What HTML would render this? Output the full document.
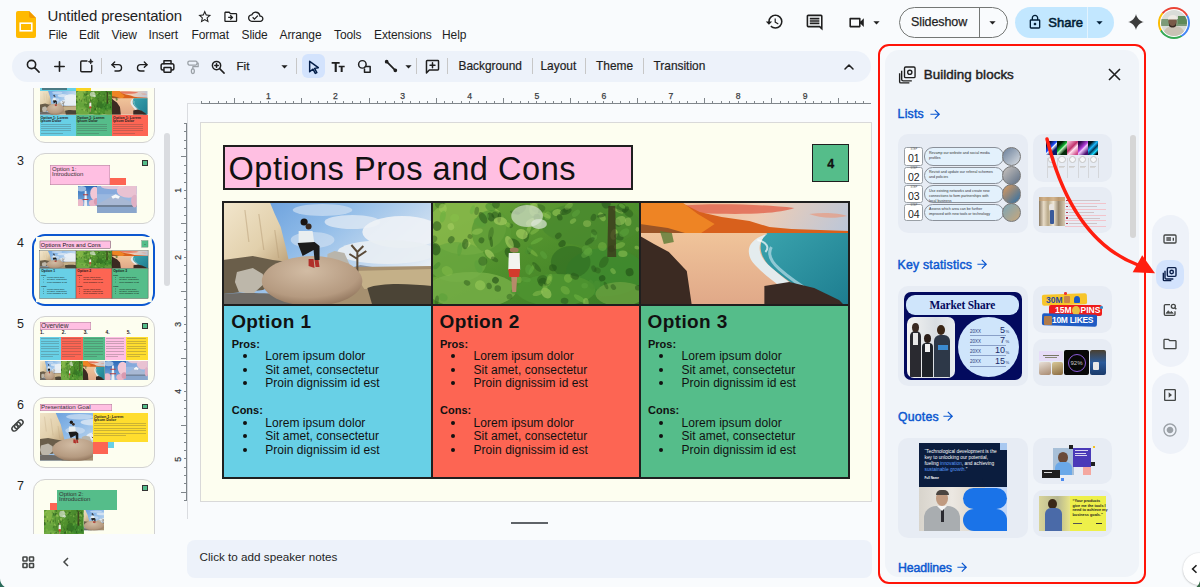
<!DOCTYPE html>
<html><head><meta charset="utf-8">
<style>
*{box-sizing:border-box;margin:0;padding:0}
html,body{width:1200px;height:587px;overflow:hidden;background:#f9fbfd;font-family:"Liberation Sans",sans-serif;color:#1f1f1f}
.a{position:absolute}
.t{position:absolute;white-space:nowrap;line-height:1}
svg.i{position:absolute;overflow:visible}
</style></head><body>
<svg width="0" height="0" style="position:absolute">
<defs>
 <linearGradient id="sky1" x1="0" y1="0" x2="1" y2="0.6"><stop offset="0" stop-color="#5c95d8"/><stop offset="0.45" stop-color="#8fbbe8"/><stop offset="1" stop-color="#e8eef4"/></linearGradient>
 <linearGradient id="gnd1" x1="0" y1="0" x2="0" y2="1"><stop offset="0" stop-color="#b7a27a"/><stop offset="1" stop-color="#5c5040"/></linearGradient>
 <radialGradient id="bld1" cx="0.45" cy="0.3" r="0.75"><stop offset="0" stop-color="#d2bca4"/><stop offset=".7" stop-color="#b59a80"/><stop offset="1" stop-color="#8a6e56"/></radialGradient>
 <linearGradient id="cliff1" x1="0" y1="0" x2="1" y2="1"><stop offset="0" stop-color="#f2e6cc"/><stop offset=".6" stop-color="#e2d0ac"/><stop offset="1" stop-color="#b89c74"/></linearGradient>
 <linearGradient id="jg" x1="0" y1="0" x2="1" y2="1"><stop offset="0" stop-color="#6da63a"/><stop offset=".5" stop-color="#4f8f2c"/><stop offset="1" stop-color="#3a7a25"/></linearGradient>
 <linearGradient id="bsky" x1="0" y1="0" x2="1" y2="0.3"><stop offset="0" stop-color="#f0b080"/><stop offset=".55" stop-color="#f0cdb4"/><stop offset="1" stop-color="#b9c6da"/></linearGradient>
 <linearGradient id="sea" x1="0" y1="0" x2="1" y2="1"><stop offset="0" stop-color="#3aa3ad"/><stop offset="1" stop-color="#1d7d90"/></linearGradient>
 <linearGradient id="sand" x1="0" y1="0" x2="0" y2="1"><stop offset="0" stop-color="#f0c49a"/><stop offset="1" stop-color="#e0a888"/></linearGradient>
 <symbol id="p1" viewBox="0 0 210 103" preserveAspectRatio="none">
  <rect width="210" height="103" fill="url(#sky1)"/>
  <ellipse cx="100" cy="8" rx="30" ry="6" fill="#cfe0f2" opacity=".7"/>
  <ellipse cx="130" cy="20" rx="28" ry="7" fill="#dfe9f4" opacity=".8"/>
  <ellipse cx="180" cy="30" rx="40" ry="16" fill="#eef2f6" opacity=".9"/>
  <ellipse cx="165" cy="50" rx="50" ry="12" fill="#e9eef3" opacity=".9"/>
  <ellipse cx="90" cy="38" rx="22" ry="8" fill="#d5e3f1" opacity=".6"/>
  <path d="M128 66L138 63L150 65L160 67L128 68z" fill="#8a96a8"/>
  <path d="M60 66L210 64V103H60z" fill="#a69070"/>
  <path d="M130 69L210 67V86L142 87z" fill="#c4b088"/>
  <path d="M145 86C160 80 190 82 210 84V103H150z" fill="#4b4436"/>
  <path d="M105 52L112 49L122 51L127 62L124 68L104 67z" fill="#b9b5ab"/>
  <path d="M135 70V50M135 50L129 43M135 50L141 44M135 55L144 49M135 57L127 52" stroke="#5a4a38" stroke-width="2" fill="none"/>
  <path d="M0 0H47L52 12L58 25L63 45L66 58L52 62L30 64L0 68z" fill="url(#cliff1)"/>
  <path d="M22 8L26 40M36 12L41 48M52 28L56 56" stroke="#b89e78" stroke-width="1.2" opacity=".5"/>
  <path d="M0 58L30 54L50 58L66 60L60 78L40 88L0 92z" fill="#6a5e4a"/>
  <path d="M14 70L30 66L40 72L41 82L30 92L16 90L12 80z" fill="#bdb7aa"/>
  <path d="M0 92C20 90 50 91 70 94L80 103H0z" fill="#6e6b66"/>
  <ellipse cx="89.5" cy="79" rx="50.5" ry="25" fill="url(#bld1)"/>
  <circle cx="81.5" cy="20" r="3.6" fill="#1a1512"/>
  <circle cx="86" cy="24.5" r="3" fill="#3a2a20"/>
  <path d="M76 29L90 29L92 43L76 43z" fill="#e8eef0"/>
  <path d="M75 41L92 40L97 44L97 58L92 58L91 48L80 54z" fill="#1c1c1c"/>
  <path d="M86 57L91 57L92 66L86 64zM92 58L96 58L97 65L93 65z" fill="#b0302a"/>
 </symbol>
 <symbol id="p2" viewBox="0 0 210 103" preserveAspectRatio="none">
  <rect width="210" height="103" fill="url(#jg)"/>
  <ellipse cx="35" cy="25" rx="40" ry="28" fill="#88b84a" opacity=".85"/>
  <ellipse cx="25" cy="60" rx="30" ry="20" fill="#6aa840" opacity=".8"/>
  <ellipse cx="60" cy="30" rx="20" ry="22" fill="#5a9a34" opacity=".8"/>
  <ellipse cx="160" cy="22" rx="50" ry="22" fill="#4a8a2e" opacity=".85"/>
  <ellipse cx="175" cy="70" rx="40" ry="24" fill="#3f8a2e" opacity=".9"/>
  <ellipse cx="140" cy="60" rx="20" ry="16" fill="#2e6a22" opacity=".6"/>
  <ellipse cx="40" cy="88" rx="45" ry="18" fill="#78b048" opacity=".8"/>
  <ellipse cx="125" cy="88" rx="40" ry="16" fill="#4e9430" opacity=".9"/>
  <ellipse cx="190" cy="92" rx="25" ry="12" fill="#6aa040" opacity=".8"/>
  <ellipse cx="68.0" cy="15.5" rx="5.3" ry="1.8" transform="rotate(96 68.0 15.5)" fill="#1e4a14" opacity="0.58"/>
  <ellipse cx="45.1" cy="8.9" rx="4.1" ry="2.3" transform="rotate(99 45.1 8.9)" fill="#24521a" opacity="0.38"/>
  <ellipse cx="46.9" cy="64.6" rx="6.7" ry="3.5" transform="rotate(71 46.9 64.6)" fill="#5aa03a" opacity="0.60"/>
  <ellipse cx="116.9" cy="13.7" rx="4.1" ry="3.4" transform="rotate(103 116.9 13.7)" fill="#88c04a" opacity="0.40"/>
  <ellipse cx="122.1" cy="65.8" rx="3.9" ry="3.4" transform="rotate(11 122.1 65.8)" fill="#1e4a14" opacity="0.47"/>
  <ellipse cx="111.7" cy="80.1" rx="4.3" ry="4.7" transform="rotate(65 111.7 80.1)" fill="#1e4a14" opacity="0.52"/>
  <ellipse cx="51.3" cy="59.2" rx="4.6" ry="4.6" transform="rotate(131 51.3 59.2)" fill="#1e4a14" opacity="0.38"/>
  <ellipse cx="87.8" cy="78.0" rx="2.8" ry="3.2" transform="rotate(7 87.8 78.0)" fill="#88c04a" opacity="0.49"/>
  <ellipse cx="183.9" cy="32.3" rx="5.5" ry="3.6" transform="rotate(104 183.9 32.3)" fill="#9ccc5a" opacity="0.59"/>
  <ellipse cx="99.6" cy="68.4" rx="2.3" ry="4.0" transform="rotate(116 99.6 68.4)" fill="#4a9030" opacity="0.60"/>
  <ellipse cx="59.8" cy="39.7" rx="5.3" ry="1.6" transform="rotate(83 59.8 39.7)" fill="#1e4a14" opacity="0.47"/>
  <ellipse cx="45.8" cy="29.6" rx="5.7" ry="2.9" transform="rotate(165 45.8 29.6)" fill="#9ccc5a" opacity="0.46"/>
  <ellipse cx="115.4" cy="91.0" rx="6.1" ry="4.5" transform="rotate(50 115.4 91.0)" fill="#b2d66a" opacity="0.52"/>
  <ellipse cx="79.9" cy="23.8" rx="2.4" ry="2.0" transform="rotate(119 79.9 23.8)" fill="#24521a" opacity="0.40"/>
  <ellipse cx="59.2" cy="15.0" rx="4.7" ry="3.6" transform="rotate(57 59.2 15.0)" fill="#24521a" opacity="0.59"/>
  <ellipse cx="137.5" cy="76.2" rx="4.3" ry="4.5" transform="rotate(171 137.5 76.2)" fill="#88c04a" opacity="0.45"/>
  <ellipse cx="83.8" cy="10.7" rx="5.2" ry="1.7" transform="rotate(12 83.8 10.7)" fill="#1e4a14" opacity="0.38"/>
  <ellipse cx="126.2" cy="10.5" rx="4.8" ry="3.4" transform="rotate(171 126.2 10.5)" fill="#9ccc5a" opacity="0.57"/>
  <ellipse cx="129.0" cy="15.3" rx="3.3" ry="2.7" transform="rotate(66 129.0 15.3)" fill="#2a5a1a" opacity="0.60"/>
  <ellipse cx="97.9" cy="49.8" rx="2.4" ry="1.9" transform="rotate(62 97.9 49.8)" fill="#24521a" opacity="0.39"/>
  <ellipse cx="4.9" cy="98.0" rx="4.6" ry="2.0" transform="rotate(98 4.9 98.0)" fill="#24521a" opacity="0.42"/>
  <ellipse cx="135.0" cy="9.4" rx="6.2" ry="3.3" transform="rotate(163 135.0 9.4)" fill="#1e4a14" opacity="0.48"/>
  <ellipse cx="163.6" cy="34.0" rx="3.1" ry="4.3" transform="rotate(177 163.6 34.0)" fill="#5aa03a" opacity="0.60"/>
  <ellipse cx="171.8" cy="76.2" rx="3.1" ry="3.3" transform="rotate(64 171.8 76.2)" fill="#1e4a14" opacity="0.55"/>
  <ellipse cx="99.2" cy="19.9" rx="5.0" ry="2.7" transform="rotate(146 99.2 19.9)" fill="#b2d66a" opacity="0.59"/>
  <ellipse cx="76.6" cy="22.7" rx="3.1" ry="2.2" transform="rotate(37 76.6 22.7)" fill="#88c04a" opacity="0.56"/>
  <ellipse cx="100.7" cy="67.3" rx="6.0" ry="1.8" transform="rotate(119 100.7 67.3)" fill="#6ab040" opacity="0.60"/>
  <ellipse cx="157.5" cy="49.2" rx="2.9" ry="4.3" transform="rotate(60 157.5 49.2)" fill="#6ab040" opacity="0.60"/>
  <ellipse cx="83.1" cy="41.3" rx="6.7" ry="4.0" transform="rotate(31 83.1 41.3)" fill="#1e4a14" opacity="0.50"/>
  <ellipse cx="97.7" cy="67.6" rx="5.1" ry="3.6" transform="rotate(85 97.7 67.6)" fill="#5aa03a" opacity="0.60"/>
  <ellipse cx="115.2" cy="13.5" rx="2.1" ry="4.9" transform="rotate(117 115.2 13.5)" fill="#9ccc5a" opacity="0.46"/>
  <ellipse cx="183.1" cy="85.1" rx="3.1" ry="2.4" transform="rotate(53 183.1 85.1)" fill="#24521a" opacity="0.43"/>
  <ellipse cx="114.3" cy="85.9" rx="2.3" ry="4.1" transform="rotate(162 114.3 85.9)" fill="#88c04a" opacity="0.46"/>
  <ellipse cx="192.7" cy="51.7" rx="4.7" ry="3.3" transform="rotate(3 192.7 51.7)" fill="#9ccc5a" opacity="0.50"/>
  <ellipse cx="163.0" cy="15.4" rx="2.7" ry="3.7" transform="rotate(22 163.0 15.4)" fill="#24521a" opacity="0.48"/>
  <ellipse cx="116.6" cy="80.8" rx="2.5" ry="3.5" transform="rotate(45 116.6 80.8)" fill="#1e4a14" opacity="0.48"/>
  <ellipse cx="118.0" cy="78.3" rx="6.6" ry="3.1" transform="rotate(110 118.0 78.3)" fill="#88c04a" opacity="0.40"/>
  <ellipse cx="58.2" cy="52.3" rx="6.0" ry="3.3" transform="rotate(45 58.2 52.3)" fill="#b2d66a" opacity="0.58"/>
  <ellipse cx="187.5" cy="20.9" rx="4.2" ry="3.0" transform="rotate(71 187.5 20.9)" fill="#24521a" opacity="0.41"/>
  <ellipse cx="15.4" cy="69.0" rx="5.9" ry="4.6" transform="rotate(28 15.4 69.0)" fill="#88c04a" opacity="0.44"/>
  <ellipse cx="53.2" cy="14.1" rx="4.3" ry="4.1" transform="rotate(17 53.2 14.1)" fill="#5aa03a" opacity="0.60"/>
  <ellipse cx="207.9" cy="85.7" rx="2.8" ry="3.0" transform="rotate(93 207.9 85.7)" fill="#1e4a14" opacity="0.44"/>
  <ellipse cx="19.4" cy="37.7" rx="3.7" ry="3.1" transform="rotate(127 19.4 37.7)" fill="#24521a" opacity="0.51"/>
  <ellipse cx="107.6" cy="6.6" rx="6.9" ry="4.3" transform="rotate(175 107.6 6.6)" fill="#2a5a1a" opacity="0.42"/>
  <ellipse cx="190.2" cy="18.7" rx="5.8" ry="4.4" transform="rotate(153 190.2 18.7)" fill="#b2d66a" opacity="0.45"/>
  <ellipse cx="112.7" cy="53.0" rx="4.5" ry="2.6" transform="rotate(50 112.7 53.0)" fill="#5aa03a" opacity="0.60"/>
  <ellipse cx="89.3" cy="7.5" rx="6.7" ry="3.7" transform="rotate(144 89.3 7.5)" fill="#1e4a14" opacity="0.37"/>
  <ellipse cx="181.2" cy="46.7" rx="3.7" ry="3.4" transform="rotate(167 181.2 46.7)" fill="#1e4a14" opacity="0.36"/>
  <ellipse cx="149.0" cy="96.6" rx="6.8" ry="2.4" transform="rotate(33 149.0 96.6)" fill="#6ab040" opacity="0.60"/>
  <ellipse cx="64.1" cy="78.2" rx="3.4" ry="3.3" transform="rotate(32 64.1 78.2)" fill="#1e4a14" opacity="0.60"/>
  <ellipse cx="7.8" cy="1.9" rx="4.5" ry="4.9" transform="rotate(93 7.8 1.9)" fill="#2a5a1a" opacity="0.38"/>
  <ellipse cx="172.0" cy="44.5" rx="4.5" ry="4.4" transform="rotate(71 172.0 44.5)" fill="#88c04a" opacity="0.40"/>
  <ellipse cx="48.2" cy="20.5" rx="6.4" ry="4.1" transform="rotate(25 48.2 20.5)" fill="#5aa03a" opacity="0.60"/>
  <ellipse cx="175.8" cy="1.5" rx="5.1" ry="4.6" transform="rotate(78 175.8 1.5)" fill="#24521a" opacity="0.56"/>
  <ellipse cx="182.8" cy="69.1" rx="3.4" ry="2.3" transform="rotate(53 182.8 69.1)" fill="#9ccc5a" opacity="0.42"/>
  <ellipse cx="0.8" cy="37.5" rx="3.6" ry="4.9" transform="rotate(58 0.8 37.5)" fill="#2a5a1a" opacity="0.40"/>
  <ellipse cx="38.4" cy="34.5" rx="2.4" ry="2.5" transform="rotate(118 38.4 34.5)" fill="#1e4a14" opacity="0.37"/>
  <ellipse cx="171.6" cy="14.8" rx="4.9" ry="2.9" transform="rotate(54 171.6 14.8)" fill="#9ccc5a" opacity="0.50"/>
  <ellipse cx="111.1" cy="77.3" rx="5.3" ry="4.0" transform="rotate(158 111.1 77.3)" fill="#2a5a1a" opacity="0.53"/>
  <ellipse cx="103.8" cy="29.3" rx="5.1" ry="2.0" transform="rotate(148 103.8 29.3)" fill="#88c04a" opacity="0.51"/>
  <ellipse cx="154.1" cy="83.7" rx="2.7" ry="3.3" transform="rotate(91 154.1 83.7)" fill="#5aa03a" opacity="0.60"/>
  <ellipse cx="173.5" cy="60.2" rx="6.5" ry="3.9" transform="rotate(125 173.5 60.2)" fill="#1e4a14" opacity="0.36"/>
  <ellipse cx="133.8" cy="98.8" rx="3.9" ry="3.1" transform="rotate(9 133.8 98.8)" fill="#24521a" opacity="0.52"/>
  <ellipse cx="102.8" cy="0.3" rx="6.0" ry="4.1" transform="rotate(91 102.8 0.3)" fill="#88c04a" opacity="0.48"/>
  <ellipse cx="156.6" cy="48.8" rx="6.0" ry="4.5" transform="rotate(42 156.6 48.8)" fill="#5aa03a" opacity="0.60"/>
  <ellipse cx="155.4" cy="100.5" rx="4.5" ry="2.8" transform="rotate(86 155.4 100.5)" fill="#9ccc5a" opacity="0.50"/>
  <ellipse cx="135.0" cy="8.0" rx="2.7" ry="2.4" transform="rotate(134 135.0 8.0)" fill="#24521a" opacity="0.38"/>
  <ellipse cx="101.3" cy="50.0" rx="6.9" ry="1.8" transform="rotate(39 101.3 50.0)" fill="#88c04a" opacity="0.48"/>
  <ellipse cx="97.6" cy="48.0" rx="2.6" ry="4.6" transform="rotate(36 97.6 48.0)" fill="#4a9030" opacity="0.60"/>
  <ellipse cx="3.7" cy="47.3" rx="6.1" ry="4.9" transform="rotate(81 3.7 47.3)" fill="#1e4a14" opacity="0.58"/>
  <ellipse cx="195.4" cy="7.7" rx="2.5" ry="4.1" transform="rotate(47 195.4 7.7)" fill="#24521a" opacity="0.56"/>
  <ellipse cx="106.8" cy="91.3" rx="5.5" ry="2.3" transform="rotate(162 106.8 91.3)" fill="#9ccc5a" opacity="0.39"/>
  <ellipse cx="199.5" cy="70.2" rx="4.0" ry="4.0" transform="rotate(75 199.5 70.2)" fill="#1e4a14" opacity="0.56"/>
  <ellipse cx="0.4" cy="77.3" rx="6.2" ry="1.9" transform="rotate(167 0.4 77.3)" fill="#88c04a" opacity="0.42"/>
  <ellipse cx="78.2" cy="40.5" rx="7.0" ry="3.6" transform="rotate(65 78.2 40.5)" fill="#b2d66a" opacity="0.56"/>
  <ellipse cx="58.9" cy="5.3" rx="5.3" ry="3.7" transform="rotate(27 58.9 5.3)" fill="#4a9030" opacity="0.60"/>
  <ellipse cx="107.3" cy="19.6" rx="3.9" ry="4.8" transform="rotate(159 107.3 19.6)" fill="#6ab040" opacity="0.60"/>
  <ellipse cx="84.0" cy="90.2" rx="4.8" ry="2.2" transform="rotate(15 84.0 90.2)" fill="#4a9030" opacity="0.60"/>
  <ellipse cx="94.7" cy="77.5" rx="5.2" ry="2.5" transform="rotate(9 94.7 77.5)" fill="#5aa03a" opacity="0.60"/>
  <ellipse cx="35.9" cy="42.7" rx="3.4" ry="2.4" transform="rotate(133 35.9 42.7)" fill="#b2d66a" opacity="0.51"/>
  <ellipse cx="63.2" cy="57.4" rx="4.0" ry="2.1" transform="rotate(29 63.2 57.4)" fill="#2a5a1a" opacity="0.49"/>
  <ellipse cx="95.1" cy="34.3" rx="5.8" ry="3.0" transform="rotate(99 95.1 34.3)" fill="#1e4a14" opacity="0.44"/>
  <ellipse cx="19.1" cy="24.6" rx="3.3" ry="3.5" transform="rotate(160 19.1 24.6)" fill="#b2d66a" opacity="0.45"/>
  <ellipse cx="156.6" cy="21.6" rx="3.4" ry="4.1" transform="rotate(90 156.6 21.6)" fill="#b2d66a" opacity="0.38"/>
  <ellipse cx="105.7" cy="64.9" rx="6.3" ry="2.3" transform="rotate(49 105.7 64.9)" fill="#2a5a1a" opacity="0.51"/>
  <ellipse cx="90.7" cy="32.1" rx="6.1" ry="4.9" transform="rotate(23 90.7 32.1)" fill="#b2d66a" opacity="0.59"/>
  <ellipse cx="102.9" cy="7.5" rx="6.7" ry="4.7" transform="rotate(95 102.9 7.5)" fill="#b2d66a" opacity="0.41"/>
  <ellipse cx="22.9" cy="15.9" rx="4.6" ry="3.9" transform="rotate(169 22.9 15.9)" fill="#88c04a" opacity="0.56"/>
  <ellipse cx="187.9" cy="8.8" rx="5.9" ry="1.5" transform="rotate(23 187.9 8.8)" fill="#9ccc5a" opacity="0.51"/>
  <ellipse cx="63.8" cy="13.2" rx="3.3" ry="3.7" transform="rotate(126 63.8 13.2)" fill="#1e4a14" opacity="0.43"/>
  <ellipse cx="198.1" cy="19.7" rx="3.3" ry="4.3" transform="rotate(0 198.1 19.7)" fill="#b2d66a" opacity="0.42"/>
  <ellipse cx="66.4" cy="86.5" rx="3.2" ry="3.3" transform="rotate(98 66.4 86.5)" fill="#2a5a1a" opacity="0.53"/>
  <ellipse cx="64.6" cy="2.2" rx="4.5" ry="3.9" transform="rotate(76 64.6 2.2)" fill="#24521a" opacity="0.46"/>
  <ellipse cx="77.7" cy="50.8" rx="5.5" ry="4.0" transform="rotate(65 77.7 50.8)" fill="#1e4a14" opacity="0.55"/>
  <ellipse cx="155.2" cy="52.0" rx="3.0" ry="4.9" transform="rotate(56 155.2 52.0)" fill="#5aa03a" opacity="0.60"/>
  <ellipse cx="97.7" cy="27.3" rx="6.4" ry="1.9" transform="rotate(112 97.7 27.3)" fill="#9ccc5a" opacity="0.47"/>
  <ellipse cx="191.2" cy="5.8" rx="5.0" ry="4.7" transform="rotate(10 191.2 5.8)" fill="#24521a" opacity="0.39"/>
  <ellipse cx="10.9" cy="6.2" rx="4.0" ry="4.6" transform="rotate(159 10.9 6.2)" fill="#9ccc5a" opacity="0.58"/>
  <ellipse cx="69.1" cy="19.1" rx="6.7" ry="4.1" transform="rotate(6 69.1 19.1)" fill="#b2d66a" opacity="0.56"/>
  <ellipse cx="206.8" cy="45.6" rx="2.5" ry="1.8" transform="rotate(15 206.8 45.6)" fill="#9ccc5a" opacity="0.49"/>
  <ellipse cx="159.3" cy="39.2" rx="5.8" ry="2.6" transform="rotate(145 159.3 39.2)" fill="#24521a" opacity="0.47"/>
  <ellipse cx="78.3" cy="94.7" rx="3.0" ry="2.8" transform="rotate(161 78.3 94.7)" fill="#2a5a1a" opacity="0.41"/>
  <ellipse cx="131.3" cy="41.7" rx="3.9" ry="3.1" transform="rotate(145 131.3 41.7)" fill="#1e4a14" opacity="0.54"/>
  <ellipse cx="188.7" cy="34.9" rx="3.4" ry="4.9" transform="rotate(111 188.7 34.9)" fill="#24521a" opacity="0.52"/>
  <ellipse cx="194.1" cy="30.6" rx="5.6" ry="3.6" transform="rotate(145 194.1 30.6)" fill="#5aa03a" opacity="0.60"/>
  <ellipse cx="5.1" cy="24.1" rx="4.4" ry="4.8" transform="rotate(172 5.1 24.1)" fill="#2a5a1a" opacity="0.58"/>
  <ellipse cx="171.1" cy="13.7" rx="4.5" ry="1.5" transform="rotate(168 171.1 13.7)" fill="#24521a" opacity="0.54"/>
  <ellipse cx="127.5" cy="33.8" rx="3.6" ry="2.8" transform="rotate(141 127.5 33.8)" fill="#1e4a14" opacity="0.45"/>
  <ellipse cx="33.6" cy="42.0" rx="5.2" ry="3.2" transform="rotate(98 33.6 42.0)" fill="#2a5a1a" opacity="0.57"/>
  <ellipse cx="207.4" cy="27.3" rx="2.4" ry="1.8" transform="rotate(90 207.4 27.3)" fill="#b2d66a" opacity="0.39"/>
  <ellipse cx="27.9" cy="47.5" rx="6.5" ry="2.3" transform="rotate(97 27.9 47.5)" fill="#5aa03a" opacity="0.60"/>
  <ellipse cx="163.7" cy="30.3" rx="3.4" ry="2.4" transform="rotate(46 163.7 30.3)" fill="#2a5a1a" opacity="0.41"/>
  <ellipse cx="51.5" cy="15.8" rx="6.4" ry="3.5" transform="rotate(59 51.5 15.8)" fill="#1e4a14" opacity="0.48"/>
  <ellipse cx="48.6" cy="83.3" rx="5.3" ry="5.0" transform="rotate(18 48.6 83.3)" fill="#9ccc5a" opacity="0.56"/>
  <ellipse cx="192.0" cy="4.2" rx="3.5" ry="1.9" transform="rotate(34 192.0 4.2)" fill="#6ab040" opacity="0.60"/>
  <ellipse cx="40.8" cy="7.7" rx="4.6" ry="2.1" transform="rotate(109 40.8 7.7)" fill="#6ab040" opacity="0.60"/>
  <ellipse cx="198.6" cy="10.9" rx="5.0" ry="3.7" transform="rotate(39 198.6 10.9)" fill="#1e4a14" opacity="0.36"/>
  <ellipse cx="210.0" cy="3.9" rx="5.7" ry="4.7" transform="rotate(147 210.0 3.9)" fill="#4a9030" opacity="0.60"/>
  <ellipse cx="142.4" cy="19.1" rx="3.6" ry="2.2" transform="rotate(143 142.4 19.1)" fill="#9ccc5a" opacity="0.45"/>
  <ellipse cx="167.1" cy="68.4" rx="2.8" ry="3.4" transform="rotate(118 167.1 68.4)" fill="#2a5a1a" opacity="0.45"/>
  <ellipse cx="59.5" cy="31.7" rx="6.8" ry="2.6" transform="rotate(102 59.5 31.7)" fill="#2a5a1a" opacity="0.35"/>
  <ellipse cx="161.0" cy="82.6" rx="5.2" ry="2.9" transform="rotate(73 161.0 82.6)" fill="#4a9030" opacity="0.60"/>
  <ellipse cx="189.3" cy="43.6" rx="6.1" ry="2.9" transform="rotate(159 189.3 43.6)" fill="#9ccc5a" opacity="0.38"/>
  <ellipse cx="10.9" cy="14.7" rx="6.0" ry="2.9" transform="rotate(103 10.9 14.7)" fill="#6ab040" opacity="0.60"/>
  <ellipse cx="105.9" cy="15.0" rx="3.4" ry="3.3" transform="rotate(167 105.9 15.0)" fill="#2a5a1a" opacity="0.54"/>
  <ellipse cx="166.4" cy="82.9" rx="3.5" ry="4.4" transform="rotate(8 166.4 82.9)" fill="#4a9030" opacity="0.60"/>
  <ellipse cx="11.2" cy="95.4" rx="3.9" ry="4.7" transform="rotate(112 11.2 95.4)" fill="#5aa03a" opacity="0.60"/>
  <ellipse cx="134.5" cy="88.2" rx="5.1" ry="3.7" transform="rotate(35 134.5 88.2)" fill="#88c04a" opacity="0.40"/>
  <ellipse cx="83.9" cy="53.3" rx="3.9" ry="1.9" transform="rotate(44 83.9 53.3)" fill="#9ccc5a" opacity="0.36"/>
  <ellipse cx="118.1" cy="78.0" rx="2.2" ry="4.4" transform="rotate(21 118.1 78.0)" fill="#88c04a" opacity="0.56"/>
  <ellipse cx="163.4" cy="66.8" rx="3.5" ry="2.4" transform="rotate(70 163.4 66.8)" fill="#24521a" opacity="0.46"/>
  <ellipse cx="4.9" cy="63.7" rx="4.4" ry="2.3" transform="rotate(137 4.9 63.7)" fill="#4a9030" opacity="0.60"/>
  <ellipse cx="175.7" cy="83.5" rx="4.0" ry="1.7" transform="rotate(65 175.7 83.5)" fill="#2a5a1a" opacity="0.48"/>
  <ellipse cx="138.0" cy="4.2" rx="2.7" ry="4.7" transform="rotate(56 138.0 4.2)" fill="#9ccc5a" opacity="0.36"/>
  <ellipse cx="105.8" cy="38.9" rx="6.8" ry="2.0" transform="rotate(154 105.8 38.9)" fill="#6ab040" opacity="0.60"/>
  <ellipse cx="145.4" cy="11.3" rx="2.7" ry="4.6" transform="rotate(52 145.4 11.3)" fill="#5aa03a" opacity="0.60"/>
  <ellipse cx="144.1" cy="74.3" rx="3.1" ry="4.4" transform="rotate(110 144.1 74.3)" fill="#2a5a1a" opacity="0.57"/>
  <ellipse cx="57.7" cy="84.0" rx="2.7" ry="3.3" transform="rotate(166 57.7 84.0)" fill="#2a5a1a" opacity="0.50"/>
  <ellipse cx="49.9" cy="38.3" rx="3.0" ry="2.9" transform="rotate(115 49.9 38.3)" fill="#2a5a1a" opacity="0.57"/>
  <ellipse cx="35.4" cy="80.8" rx="2.6" ry="3.4" transform="rotate(115 35.4 80.8)" fill="#2a5a1a" opacity="0.49"/>
  <ellipse cx="96" cy="14" rx="16" ry="11" fill="#cfdcc6" opacity=".75"/>
  <ellipse cx="108" cy="22" rx="8" ry="5" fill="#e0e8dc" opacity=".7"/>
  <path d="M178 4L185 4L186 55L177 55z" fill="#3a2e1a" opacity=".7"/>
  <ellipse cx="83" cy="48" rx="4.5" ry="2.5" fill="#9c7a58"/>
  <path d="M77.5 51H88.5L89 68H77z" fill="#f3f3f0"/>
  <path d="M77 67H89L88 75H78z" fill="#d33a2c"/>
  <path d="M80 75H86L85 90H81z" fill="#b78a6a"/>
 </symbol>
 <symbol id="p3" viewBox="0 0 210 103" preserveAspectRatio="none">
  <rect width="210" height="103" fill="url(#bsky)"/>
  <path d="M36 4C70 1 120 2 155 6C140 12 100 13 60 11z" fill="#e26a54" opacity=".85"/>
  <path d="M170 12C185 10 200 11 208 14C195 17 180 16 170 12z" fill="#e89a80" opacity=".7"/>
  <path d="M0 0H40L60 10L82 15L110 19L130 25L152 27L210 29V33H130L60 38L30 42L0 45z" fill="#d8601c"/>
  <path d="M0 0H42L58 12L75 22L60 32L20 36L0 38z" fill="#ee8424"/>
  <path d="M0 22L28 26L52 33L30 40L0 42z" fill="#9a5426"/>
  <path d="M0 31L210 31V103H0z" fill="url(#sand)"/>
  <path d="M128 31H210V103H185C168 92 150 80 132 66C120 55 117 40 128 31z" fill="url(#sea)"/>
  <path d="M128 32C117 40 118 52 128 62C142 75 160 88 176 98L160 98C143 86 124 73 113 60C105 48 110 37 128 32z" fill="#e4eef2" opacity=".95"/><path d="M132 45C128 52 132 60 140 67C150 76 165 86 178 94" stroke="#a8d4e0" stroke-width="3" fill="none" opacity=".8"/>
  <path d="M118 38C128 40 130 46 126 50" stroke="#fff" stroke-width="2" fill="none" opacity=".7"/>
  <path d="M0 34L14 42L29 50L47 69L52 103H0z" fill="#3b2a22"/>
  <path d="M20 29L32 31L34 40L24 42z" fill="#5a7a34" opacity=".8"/>
  <path d="M125 84L150 80L175 86L200 98L205 103H125z" fill="#3a2a24"/>
 </symbol>
 <linearGradient id="bl1" x1="0" y1="0" x2="0" y2="1"><stop offset="0" stop-color="#2a6ab8"/><stop offset="1" stop-color="#8ab4e0"/></linearGradient>
 <symbol id="p4" viewBox="0 0 60 60" preserveAspectRatio="none">
  <rect width="60" height="60" fill="url(#bl1)"/>
  <ellipse cx="10" cy="8" rx="14" ry="8" fill="#c8dcf0" opacity=".7"/>
  <path d="M20 14L25 14L27 60L18 60z" fill="#eef0f2"/>
  <path d="M15 24H30V27H15zM14 38H31V41H14z" fill="#b33a3a"/>
  <ellipse cx="50" cy="22" rx="14" ry="20" fill="#f2c8d6"/>
  <ellipse cx="44" cy="50" rx="12" ry="10" fill="#e8b4c6"/>
  <ellipse cx="6" cy="50" rx="10" ry="12" fill="#eab8c8"/>
  <ellipse cx="55" cy="45" rx="8" ry="10" fill="#d89ab0"/>
 </symbol>
 <symbol id="p5" viewBox="0 0 100 60" preserveAspectRatio="none">
  <rect width="100" height="60" fill="#9ab8e0"/>
  <rect y="0" width="100" height="18" fill="#86aadc"/>
  <path d="M0 40L22 30L38 22L47 19L56 22L74 31L100 40V60H0z" fill="#a8b8d4"/>
  <path d="M36 23L47 18L58 23L54 28L46 26L40 28z" fill="#f6f8fa"/>
  <rect y="42" width="100" height="4" fill="#6a7a90"/>
  <rect y="46" width="100" height="14" fill="#8aa6cc"/>
  <ellipse cx="80" cy="10" rx="30" ry="16" fill="#e9c2d2"/>
  <ellipse cx="95" cy="33" rx="9" ry="14" fill="#dfb0c4"/>
  <ellipse cx="40" cy="1" rx="30" ry="6" fill="#eecad6" opacity=".85"/>
 </symbol>
</defs>
</svg>

<!-- ===== HEADER ===== -->
<svg class="i" style="left:16px;top:11px" width="20" height="27" viewBox="0 0 20 27">
 <path d="M2 0H13L20 7V25a2 2 0 0 1-2 2H2a2 2 0 0 1-2-2V2a2 2 0 0 1 2-2z" fill="#ffba00"/>
 <path d="M13 0L20 7H15a2 2 0 0 1-2-2z" fill="#f29900"/>
 <rect x="4.2" y="12.2" width="11.6" height="7.6" fill="none" stroke="#fff" stroke-width="1.6"/>
</svg>
<div class="t" style="left:47.5px;top:8px;font-size:15px;letter-spacing:-0.15px;color:#1f1f1f">Untitled presentation</div>
<svg class="i" style="left:197.4px;top:9.2px" width="15.5" height="15.5" viewBox="0 0 24 24" fill="#1f1f1f"><path d="M22 9.24l-7.19-.62L12 2 9.19 8.63 2 9.24l5.46 4.73L5.82 21 12 17.27 18.18 21l-1.63-7.03L22 9.24zM12 15.4l-3.76 2.27 1-4.28-3.32-2.88 4.38-.38L12 6.1l1.71 4.04 4.38.38-3.32 2.88 1 4.28L12 15.4z"/></svg>
<svg class="i" style="left:223px;top:9.3px" width="15.5" height="15.5" viewBox="0 0 24 24" fill="#1f1f1f"><path d="M20 6h-8l-2-2H4c-1.1 0-1.99.9-1.99 2L2 18c0 1.1.9 2 2 2h16c1.1 0 2-.9 2-2V8c0-1.1-.9-2-2-2zm0 12H4V6h5.17l2 2H20v10zm-7.84-6H8v2h4.16l-1.59 1.59L11.99 17 16 13.01 11.99 9l-1.41 1.41L12.16 12z"/></svg>
<svg class="i" style="left:248.4px;top:8.6px" width="15.5" height="15.5" viewBox="0 0 24 24" fill="#1f1f1f"><path d="M19.35 10.04A7.49 7.49 0 0 0 12 4C9.11 4 6.6 5.64 5.35 8.04A5.994 5.994 0 0 0 0 14c0 3.31 2.69 6 6 6h13c2.76 0 5-2.24 5-5 0-2.64-2.05-4.78-4.65-4.96zM19 18H6c-2.21 0-4-1.790-4-4 0-2.05 1.53-3.76 3.56-3.97l1.07-.11.5-.95A5.469 5.469 0 0 1 12 6c2.62 0 4.88 1.86 5.39 4.43l.3 1.5 1.53.11A2.98 2.98 0 0 1 22 15c0 1.65-1.35 3-3 3zm-9-3.82l-2.09-2.09L6.5 13.5 10 17l6.01-6.01-1.41-1.41z"/></svg>

<div style="font-size:12px;letter-spacing:-0.1px">
<div class="t" style="left:48.5px;top:29px">File</div>
<div class="t" style="left:79px;top:29px">Edit</div>
<div class="t" style="left:111.5px;top:29px">View</div>
<div class="t" style="left:148.5px;top:29px">Insert</div>
<div class="t" style="left:191.5px;top:29px">Format</div>
<div class="t" style="left:241.5px;top:29px">Slide</div>
<div class="t" style="left:279.5px;top:29px">Arrange</div>
<div class="t" style="left:334px;top:29px">Tools</div>
<div class="t" style="left:374px;top:29px">Extensions</div>
<div class="t" style="left:442px;top:29px">Help</div>
</div>

<svg class="i" style="left:765px;top:12px" width="19.2" height="19.2" viewBox="0 0 24 24" fill="#1f1f1f"><path d="M13 3a9 9 0 0 0-9 9H1l3.89 3.89.07.14L9 12H6c0-3.87 3.13-7 7-7s7 3.13 7 7-3.13 7-7 7c-1.93 0-3.68-.79-4.94-2.06l-1.42 1.42A8.954 8.954 0 0 0 13 21a9 9 0 0 0 0-18zm-1 5v5l4.28 2.54.72-1.21-3.5-2.08V8H12z"/></svg>
<svg class="i" style="left:804.5px;top:12.5px" width="19.2" height="19.2" viewBox="0 0 24 24" fill="#1f1f1f"><path d="M21.99 4c0-1.1-.89-2-1.99-2H4c-1.1 0-2 .9-2 2v12c0 1.1.9 2 2 2h14l4 4-.01-18zM20 4v13.17L18.83 16H4V4h16zM6 12h12v2H6zm0-3h12v2H6zm0-3h12v2H6z"/></svg>
<svg class="i" style="left:847px;top:12.5px" width="19.2" height="19.2" viewBox="0 0 24 24" fill="#1f1f1f"><path d="M15 8v8H5V8h10m1-2H4c-.55 0-1 .45-1 1v10c0 .55.45 1 1 1h12c.55 0 1-.45 1-1v-3.5l4 4v-11l-4 4V7c0-.55-.45-1-1-1z"/></svg>
<svg class="i" style="left:868.8px;top:14.5px" width="15" height="15" viewBox="0 0 24 24" fill="#1f1f1f"><path d="M7 10l5 5 5-5z"/></svg>

<div class="a" style="left:898.5px;top:6.5px;width:109.5px;height:31px;border:1px solid #747775;border-radius:16px"></div>
<div class="a" style="left:979px;top:7px;width:1px;height:30px;background:#747775"></div>
<div class="t" style="left:911px;top:16px;font-size:12.5px;letter-spacing:-0.1px;-webkit-text-stroke:0.25px #1f1f1f;color:#1f1f1f">Slideshow</div>
<svg class="i" style="left:985.2px;top:14.5px" width="15" height="15" viewBox="0 0 24 24" fill="#1f1f1f"><path d="M7 10l5 5 5-5z"/></svg>

<div class="a" style="left:1014.5px;top:6.5px;width:99px;height:31.5px;border-radius:16px;background:#c2e7ff"></div>
<div class="a" style="left:1086.5px;top:6.5px;width:1px;height:31.5px;background:#f9fbfd;opacity:.6"></div>
<svg class="i" style="left:1026.5px;top:13.5px" width="16" height="16" viewBox="0 0 24 24" fill="#001d35"><path d="M18 8h-1V6c0-2.76-2.24-5-5-5S7 3.24 7 6v2H6c-1.1 0-2 .9-2 2v10c0 1.1.9 2 2 2h12c1.1 0 2-.9 2-2V10c0-1.1-.9-2-2-2zM9 6c0-1.66 1.34-3 3-3s3 1.34 3 3v2H9V6zm9 14H6V10h12v10zm-6-3c1.1 0 2-.9 2-2s-.9-2-2-2-2 .9-2 2 .9 2 2 2z"/></svg>
<div class="t" style="left:1048.3px;top:16.3px;font-size:13px;font-weight:400;letter-spacing:0px;-webkit-text-stroke:0.55px #001d35;color:#001d35">Share</div>
<svg class="i" style="left:1091.8px;top:14.5px" width="15" height="15" viewBox="0 0 24 24" fill="#001d35"><path d="M7 10l5 5 5-5z"/></svg>

<svg class="i" style="left:1127.5px;top:14.2px" width="16" height="16" viewBox="0 0 24 24" fill="#3c3c3c"><path d="M12 0C13 6 18 11 24 12 18 13 13 18 12 24 11 18 6 13 0 12 6 11 11 6 12 0z"/></svg>

<div class="a" style="left:1158px;top:6.5px;width:32px;height:32px;border-radius:50%;background:conic-gradient(from -50deg,#ea4335 0deg 110deg,#4285f4 110deg 200deg,#34a853 200deg 290deg,#fbbc04 290deg 360deg)"></div>
<div class="a" style="left:1160px;top:8.5px;width:28px;height:28px;border-radius:50%;background:#fff"></div>
<svg class="i" style="left:1161px;top:9.5px" width="26" height="26" viewBox="0 0 26 26">
 <clipPath id="avc"><circle cx="13" cy="13" r="13"/></clipPath>
 <g clip-path="url(#avc)">
  <rect width="26" height="26" fill="#d9dcd8"/>
  <rect x="0" y="9" width="26" height="7" fill="#7d9a78"/>
  <rect x="17" y="6" width="9" height="8" fill="#5f8a5a"/>
  <path d="M2 26c0-6 4-10 11-10s11 4 11 10z" fill="#c9c2b4"/>
  <ellipse cx="11.5" cy="11.5" rx="4.2" ry="5" fill="#7a5a48"/>
  <path d="M8 13c1 4 6 4 7 0v3c-2 2-5 2-7 0z" fill="#3a2a22"/>
  <path d="M7 8c1-4 9-4 9 0v1.5H7z" fill="#eeeae4"/>
 </g>
</svg>

<!-- ===== TOOLBAR ===== -->
<div class="a" style="left:12px;top:50.5px;width:859px;height:31px;border-radius:16px;background:#edf2fa"></div>
<div id="tb">
<svg class="i" style="left:25.15px;top:58.45px" width="16.5" height="16.5" viewBox="0 0 24 24" fill="none" stroke="#1f1f1f" stroke-width="2.3" stroke-linecap="round" stroke-linejoin="round"><circle cx="9.5" cy="9.5" r="6"/><path d="M14 14l6.5 6.5"/></svg>
<svg class="i" style="left:52.10px;top:58.90px" width="15" height="15" viewBox="0 0 24 24" fill="none" stroke="#1f1f1f" stroke-width="2.6" stroke-linecap="round" stroke-linejoin="round"><path d="M12 4.5v15M4.5 12h15"/></svg>
<svg class="i" style="left:77.85px;top:58.45px" width="16.5" height="16.5" viewBox="0 0 24 24" fill="none" stroke="#1f1f1f" stroke-width="2.1" stroke-linecap="round" stroke-linejoin="round"><path d="M13 4.5H5.5a1.5 1.5 0 0 0-1.5 1.5v12.5a1.5 1.5 0 0 0 1.5 1.5h13a1.5 1.5 0 0 0 1.5-1.5V11"/><path d="M18.5 1.8l1 2.5 2.5 1-2.5 1-1 2.5-1-2.5-2.5-1 2.5-1z" fill="#1f1f1f" stroke-width="1"/></svg>
<div class="a" style="left:100.90px;top:58px;width:1px;height:16px;background:#c7c7c7"></div>
<svg class="i" style="left:109.00px;top:59.20px" width="16" height="16" viewBox="0 0 24 24" fill="none" stroke="#1f1f1f" stroke-width="2.1" stroke-linecap="round" stroke-linejoin="round"><path d="M8.5 12.5L4.5 8.5l4-4"/><path d="M4.5 8.5h9.5a4.8 4.8 0 0 1 0 9.6H9"/></svg>
<svg class="i" style="left:133.80px;top:59.20px" width="16" height="16" viewBox="0 0 24 24" fill="none" stroke="#1f1f1f" stroke-width="2.1" stroke-linecap="round" stroke-linejoin="round"><path d="M15.5 12.5l4-4-4-4"/><path d="M19.5 8.5H10a4.8 4.8 0 0 0 0 9.6h5"/></svg>
<svg class="i" style="left:159.10px;top:58.30px" width="17" height="17" viewBox="0 0 24 24" fill="none" stroke="#1f1f1f" stroke-width="2.1" stroke-linecap="round" stroke-linejoin="round"><path d="M7 8V4h10v4"/><rect x="3" y="8" width="18" height="9" rx="2.5"/><rect x="7" y="13.5" width="10" height="6.5" rx="0.5" fill="#edf2fa"/></svg>
<svg class="i" style="left:184.00px;top:58.50px" width="17" height="17" viewBox="0 0 24 24" fill="none" stroke="#9aa0a6" stroke-width="1.8" stroke-linecap="round" stroke-linejoin="round"><rect x="5.5" y="3" width="13" height="5.5" rx="2"/><path d="M18.5 5.8h1.5v5H12.5v3"/><rect x="10.5" y="14" width="4" height="6.5" rx="2"/></svg>
<svg class="i" style="left:210.25px;top:58.55px" width="16.5" height="16.5" viewBox="0 0 24 24" fill="none" stroke="#1f1f1f" stroke-width="2.2" stroke-linecap="round" stroke-linejoin="round"><circle cx="9.5" cy="9.5" r="6"/><path d="M14 14l6.5 6.5M9.5 7v5M7 9.5h5"/></svg>
<div class="t" style="left:236.5px;top:59.5px;font-size:11.6px;-webkit-text-stroke:0.25px #1f1f1f;color:#1f1f1f">Fit</div>
<svg class="i" style="left:276.70px;top:59.00px" width="15" height="15" viewBox="0 0 24 24" fill="#1f1f1f"><path d="M7 10l5 5 5-5z"/></svg>
<div class="a" style="left:295.80px;top:58px;width:1px;height:16px;background:#c7c7c7"></div>
<div class="a" style="left:302px;top:54px;width:23.3px;height:23.8px;border-radius:6px;background:#d3e3fd"></div>
<svg class="i" style="left:305.60px;top:59.20px" width="16" height="16" viewBox="0 0 24 24" fill="none" stroke="#041e49" stroke-width="2.2" stroke-linejoin="round"><path d="M5.5 3.5l13 9.5-5.6 1.1 3.4 6.3-2.4 1.3-3.4-6.4-5 3.8z"/></svg>
<svg class="i" style="left:330.00px;top:58.50px" width="16" height="16" viewBox="0 0 24 24" fill="#1f1f1f"><path d="M2.5 4.5h12v2.8H10.2V19.5H7V7.3H2.5zM13 10h9v2.5h-3v7h-3v-7h-3z"/></svg>
<svg class="i" style="left:356.30px;top:58.30px" width="17" height="17" viewBox="0 0 24 24" fill="none" stroke="#1f1f1f" stroke-width="2.1" stroke-linecap="round" stroke-linejoin="round"><circle cx="9" cy="9" r="5.3"/><path d="M13 12h7v8h-8v-4.5"/></svg>
<svg class="i" style="left:383.00px;top:57.80px" width="16" height="16" viewBox="0 0 24 24" fill="none" stroke="#1f1f1f" stroke-width="2.6" stroke-linecap="round" stroke-linejoin="round"><path d="M5.5 5.5l13 13"/><circle cx="5.5" cy="5.5" r="1.5" fill="#1f1f1f"/><circle cx="18.5" cy="18.5" r="1.5" fill="#1f1f1f"/></svg>
<svg class="i" style="left:400.60px;top:59.00px" width="15" height="15" viewBox="0 0 24 24" fill="#1f1f1f"><path d="M7 10l5 5 5-5z"/></svg>
<div class="a" style="left:415.80px;top:58px;width:1px;height:16px;background:#c7c7c7"></div>
<svg class="i" style="left:423.70px;top:58.00px" width="17" height="17" viewBox="0 0 24 24" fill="none" stroke="#1f1f1f" stroke-width="2.1" stroke-linecap="round" stroke-linejoin="round"><path d="M3.5 4.5a1 1 0 0 1 1-1h15a1 1 0 0 1 1 1v11.5a1 1 0 0 1-1 1H7.5l-4 4z"/><path d="M12 6.8v7M8.5 10.3h7"/></svg>
<div class="a" style="left:446.90px;top:58px;width:1px;height:16px;background:#c7c7c7"></div>
<div style="font-size:11.9px;color:#1f1f1f;-webkit-text-stroke:0.2px #1f1f1f">
<div class="t" style="left:458.5px;top:61px">Background</div>
<div class="t" style="left:540.5px;top:61px">Layout</div>
<div class="t" style="left:596px;top:61px">Theme</div>
<div class="t" style="left:653.5px;top:61px">Transition</div>
</div>
<div class="a" style="left:532.00px;top:58px;width:1px;height:16px;background:#c7c7c7"></div>
<div class="a" style="left:584.50px;top:58px;width:1px;height:16px;background:#c7c7c7"></div>
<div class="a" style="left:642.50px;top:58px;width:1px;height:16px;background:#c7c7c7"></div>
<svg class="i" style="left:840.80px;top:58.50px" width="16" height="16" viewBox="0 0 24 24" fill="none" stroke="#1f1f1f" stroke-width="2.3" stroke-linecap="round" stroke-linejoin="round"><path d="M6 15l6-6 6 6"/></svg>
</div>


<!-- ===== FILMSTRIP ===== -->
<div class="a" style="left:0;top:88px;width:186px;height:446px;overflow:hidden">
<div class="a" style="left:33.2px;top:-16px;width:121.5px;height:70.7px;border:1.3px solid #d2d2d2;border-radius:12px;background:#fdfef0"></div>
<div class="a" style="left:39.6px;top:-2.00px;width:36.30px;height:5.20px;background:#68d0e6;"></div>
<div class="a" style="left:76px;top:-2.00px;width:14.70px;height:5.20px;background:#f9d423;"></div>
<div class="a" style="left:41.5px;top:0.00px;width:25.50px;height:2.20px;background:#333;opacity:.55"></div>
<svg class="a" style="left:39.6px;top:3.20px" width="36.30" height="23.80"><use href="#p1"/></svg>
<svg class="a" style="left:75.9px;top:3.20px" width="36.30" height="23.80"><use href="#p2"/></svg>
<svg class="a" style="left:112.2px;top:3.20px" width="35.70" height="23.80"><use href="#p3"/></svg>
<div class="a" style="left:39.6px;top:27.00px;width:36.30px;height:21.30px;background:#68d0e6;"></div>
<div class="a" style="left:75.9px;top:27.00px;width:36.30px;height:21.30px;background:#55bd8a;"></div>
<div class="a" style="left:112.2px;top:27.00px;width:35.70px;height:21.30px;background:#fd6553;"></div>
<div class="t" style="left:40.5px;top:28.50px;font-size:3.6px;color:#222;line-height:1.05;font-weight:700">Option 1: Lorem<br>Ipsum Dolor</div>
<div class="a" style="left:40.5px;top:35.50px;width:30.00px;height:0.80px;background:#444;opacity:.28"></div>
<div class="a" style="left:40.5px;top:37.80px;width:30.00px;height:0.80px;background:#444;opacity:.28"></div>
<div class="a" style="left:40.5px;top:40.10px;width:30.00px;height:0.80px;background:#444;opacity:.28"></div>
<div class="a" style="left:40.5px;top:42.40px;width:30.00px;height:0.80px;background:#444;opacity:.28"></div>
<div class="a" style="left:40.5px;top:44.70px;width:22.00px;height:0.80px;background:#444;opacity:.28"></div>
<div class="t" style="left:76.8px;top:28.50px;font-size:3.6px;color:#222;line-height:1.05;font-weight:700">Option 1: Lorem<br>Ipsum Dolor</div>
<div class="a" style="left:76.8px;top:35.50px;width:30.00px;height:0.80px;background:#444;opacity:.28"></div>
<div class="a" style="left:76.8px;top:37.80px;width:30.00px;height:0.80px;background:#444;opacity:.28"></div>
<div class="a" style="left:76.8px;top:40.10px;width:30.00px;height:0.80px;background:#444;opacity:.28"></div>
<div class="a" style="left:76.8px;top:42.40px;width:30.00px;height:0.80px;background:#444;opacity:.28"></div>
<div class="a" style="left:76.8px;top:44.70px;width:22.00px;height:0.80px;background:#444;opacity:.28"></div>
<div class="t" style="left:113.1px;top:28.50px;font-size:3.6px;color:#222;line-height:1.05;font-weight:700">Option 1: Lorem<br>Ipsum Dolor</div>
<div class="a" style="left:113.1px;top:35.50px;width:30.00px;height:0.80px;background:#444;opacity:.28"></div>
<div class="a" style="left:113.1px;top:37.80px;width:30.00px;height:0.80px;background:#444;opacity:.28"></div>
<div class="a" style="left:113.1px;top:40.10px;width:30.00px;height:0.80px;background:#444;opacity:.28"></div>
<div class="a" style="left:113.1px;top:42.40px;width:30.00px;height:0.80px;background:#444;opacity:.28"></div>
<div class="a" style="left:113.1px;top:44.70px;width:22.00px;height:0.80px;background:#444;opacity:.28"></div>
<div class="a" style="left:33.2px;top:65px;width:121.5px;height:70.7px;border:1.3px solid #d2d2d2;border-radius:12px;background:#fdfef0"></div>
<div class="a" style="left:50.4px;top:76.50px;width:60.00px;height:20.50px;background:#ffbfe2;box-shadow:inset 0 0 0 0.4px rgba(0,0,0,.35)"></div>
<div class="t" style="left:52px;top:78.50px;font-size:6px;color:#222;line-height:0.95;color:#333">Option 1:<br>Introduction</div>
<div class="a" style="left:110.4px;top:90.00px;width:15.60px;height:7.20px;background:#fd6553;"></div>
<svg class="a" style="left:77.7px;top:97.50px" width="20.30" height="20.50"><use href="#p4"/></svg>
<svg class="a" style="left:97.3px;top:97.50px" width="39.70" height="27.30"><use href="#p5"/></svg>
<div class="a" style="left:141.8px;top:71.90px;width:6.20px;height:6.10px;background:#55bd8a;border:0.5px solid #333"></div>
<div class="a" style="left:32.3px;top:145.7px;width:123.1px;height:72.8px;border:2.8px solid #0b57d0;border-radius:13px;background:#fdfef0"></div>
<div class="a" style="left:35.7px;top:149.4px;width:670px;height:378px;transform-origin:0 0;transform:scale(0.173);overflow:hidden"><div class="a" style="left:0;top:0;width:670px;height:378px;background:#fdfef0"></div>
<div class="a" style="left:22px;top:22px;width:410px;height:45px;background:#ffbfe2;border:2px solid #1f1f1f"></div>
<div class="t" style="left:27.5px;top:29.80000000000001px;font-size:32.5px;letter-spacing:0.55px;color:#111">Options Pros and Cons</div>
<div class="a" style="left:611.4px;top:20.8px;width:36.8px;height:38px;background:#55bd8a;border:1.7px solid #1f1f1f"></div>
<div class="t" style="left:611.4px;width:36.8px;text-align:center;top:34.8px;font-size:12.5px;font-weight:700;-webkit-text-stroke:0.3px #111;color:#111">4</div>
<svg class="a" style="left:22px;top:79px" width="209" height="103"><use href="#p1"/></svg>
<svg class="a" style="left:231px;top:79px" width="208" height="103"><use href="#p2"/></svg>
<svg class="a" style="left:439px;top:79px" width="209" height="103"><use href="#p3"/></svg>
<div class="a" style="left:22px;top:181.5px;width:209px;height:173.5px;background:#68d0e6"></div>
<div class="a" style="left:231px;top:181.5px;width:208px;height:173.5px;background:#fd6553"></div>
<div class="a" style="left:439px;top:181.5px;width:209px;height:173.5px;background:#55bd8a"></div>
<div class="a" style="left:21px;top:78px;width:628px;height:278px;border:2px solid #1f1f1f"></div>
<div class="a" style="left:21px;top:180.5px;width:628px;height:2px;background:#1f1f1f"></div>
<div class="a" style="left:230px;top:78px;width:2px;height:278px;background:#1f1f1f"></div>
<div class="a" style="left:438.29999999999995px;top:78px;width:2px;height:278px;background:#1f1f1f"></div>
<div class="t" style="left:30.19999999999999px;top:189px;font-size:19px;font-weight:700;letter-spacing:0.4px;color:#111">Option 1</div>
<div class="t" style="left:30.69999999999999px;top:215.5px;font-size:11px;font-weight:700;color:#111">Pros:</div>
<div class="t" style="left:30.69999999999999px;top:282px;font-size:11px;font-weight:700;color:#111">Cons:</div>
<div class="a" style="left:41.69999999999999px;top:231.4px;width:4px;height:4px;border-radius:2px;background:#111"></div>
<div class="t" style="left:64.19999999999999px;top:227.4px;font-size:12px;letter-spacing:0.05px;color:#111">Lorem ipsum dolor</div>
<div class="a" style="left:41.69999999999999px;top:244.7px;width:4px;height:4px;border-radius:2px;background:#111"></div>
<div class="t" style="left:64.19999999999999px;top:240.7px;font-size:12px;letter-spacing:0.05px;color:#111">Sit amet, consectetur</div>
<div class="a" style="left:41.69999999999999px;top:258.0px;width:4px;height:4px;border-radius:2px;background:#111"></div>
<div class="t" style="left:64.19999999999999px;top:254.0px;font-size:12px;letter-spacing:0.05px;color:#111">Proin dignissim id est</div>
<div class="a" style="left:41.69999999999999px;top:297.9px;width:4px;height:4px;border-radius:2px;background:#111"></div>
<div class="t" style="left:64.19999999999999px;top:293.9px;font-size:12px;letter-spacing:0.05px;color:#111">Lorem ipsum dolor</div>
<div class="a" style="left:41.69999999999999px;top:311.2px;width:4px;height:4px;border-radius:2px;background:#111"></div>
<div class="t" style="left:64.19999999999999px;top:307.2px;font-size:12px;letter-spacing:0.05px;color:#111">Sit amet, consectetur</div>
<div class="a" style="left:41.69999999999999px;top:324.5px;width:4px;height:4px;border-radius:2px;background:#111"></div>
<div class="t" style="left:64.19999999999999px;top:320.5px;font-size:12px;letter-spacing:0.05px;color:#111">Proin dignissim id est</div>
<div class="t" style="left:238.5px;top:189px;font-size:19px;font-weight:700;letter-spacing:0.4px;color:#111">Option 2</div>
<div class="t" style="left:239px;top:215.5px;font-size:11px;font-weight:700;color:#111">Pros:</div>
<div class="t" style="left:239px;top:282px;font-size:11px;font-weight:700;color:#111">Cons:</div>
<div class="a" style="left:250px;top:231.4px;width:4px;height:4px;border-radius:2px;background:#111"></div>
<div class="t" style="left:272.5px;top:227.4px;font-size:12px;letter-spacing:0.05px;color:#111">Lorem ipsum dolor</div>
<div class="a" style="left:250px;top:244.7px;width:4px;height:4px;border-radius:2px;background:#111"></div>
<div class="t" style="left:272.5px;top:240.7px;font-size:12px;letter-spacing:0.05px;color:#111">Sit amet, consectetur</div>
<div class="a" style="left:250px;top:258.0px;width:4px;height:4px;border-radius:2px;background:#111"></div>
<div class="t" style="left:272.5px;top:254.0px;font-size:12px;letter-spacing:0.05px;color:#111">Proin dignissim id est</div>
<div class="a" style="left:250px;top:297.9px;width:4px;height:4px;border-radius:2px;background:#111"></div>
<div class="t" style="left:272.5px;top:293.9px;font-size:12px;letter-spacing:0.05px;color:#111">Lorem ipsum dolor</div>
<div class="a" style="left:250px;top:311.2px;width:4px;height:4px;border-radius:2px;background:#111"></div>
<div class="t" style="left:272.5px;top:307.2px;font-size:12px;letter-spacing:0.05px;color:#111">Sit amet, consectetur</div>
<div class="a" style="left:250px;top:324.5px;width:4px;height:4px;border-radius:2px;background:#111"></div>
<div class="t" style="left:272.5px;top:320.5px;font-size:12px;letter-spacing:0.05px;color:#111">Proin dignissim id est</div>
<div class="t" style="left:446.5px;top:189px;font-size:19px;font-weight:700;letter-spacing:0.4px;color:#111">Option 3</div>
<div class="t" style="left:447px;top:215.5px;font-size:11px;font-weight:700;color:#111">Pros:</div>
<div class="t" style="left:447px;top:282px;font-size:11px;font-weight:700;color:#111">Cons:</div>
<div class="a" style="left:458px;top:231.4px;width:4px;height:4px;border-radius:2px;background:#111"></div>
<div class="t" style="left:480.5px;top:227.4px;font-size:12px;letter-spacing:0.05px;color:#111">Lorem ipsum dolor</div>
<div class="a" style="left:458px;top:244.7px;width:4px;height:4px;border-radius:2px;background:#111"></div>
<div class="t" style="left:480.5px;top:240.7px;font-size:12px;letter-spacing:0.05px;color:#111">Sit amet, consectetur</div>
<div class="a" style="left:458px;top:258.0px;width:4px;height:4px;border-radius:2px;background:#111"></div>
<div class="t" style="left:480.5px;top:254.0px;font-size:12px;letter-spacing:0.05px;color:#111">Proin dignissim id est</div>
<div class="a" style="left:458px;top:297.9px;width:4px;height:4px;border-radius:2px;background:#111"></div>
<div class="t" style="left:480.5px;top:293.9px;font-size:12px;letter-spacing:0.05px;color:#111">Lorem ipsum dolor</div>
<div class="a" style="left:458px;top:311.2px;width:4px;height:4px;border-radius:2px;background:#111"></div>
<div class="t" style="left:480.5px;top:307.2px;font-size:12px;letter-spacing:0.05px;color:#111">Sit amet, consectetur</div>
<div class="a" style="left:458px;top:324.5px;width:4px;height:4px;border-radius:2px;background:#111"></div>
<div class="t" style="left:480.5px;top:320.5px;font-size:12px;letter-spacing:0.05px;color:#111">Proin dignissim id est</div></div>
<div class="a" style="left:33.2px;top:228.3px;width:121.5px;height:70.7px;border:1.3px solid #d2d2d2;border-radius:12px;background:#fdfef0"></div>
<div class="a" style="left:39.5px;top:234.30px;width:51.30px;height:7.70px;background:#ffbfe2;box-shadow:inset 0 0 0 0.4px rgba(0,0,0,.35)"></div>
<div class="t" style="left:41px;top:235.20px;font-size:6.6px;color:#222;color:#333">Overview</div>
<div class="a" style="left:142px;top:234.60px;width:6.00px;height:6.00px;background:#55bd8a;border:0.5px solid #333"></div>
<div class="t" style="left:40.0px;top:243.20px;font-size:4.8px;color:#222;font-weight:700">1.</div>
<div class="a" style="left:39.5px;top:248.80px;width:21.80px;height:23.70px;background:#68d0e6;"></div>
<div class="a" style="left:40.5px;top:250.00px;width:18.80px;height:0.80px;background:#444;opacity:.28"></div>
<div class="a" style="left:40.5px;top:252.60px;width:18.80px;height:0.80px;background:#444;opacity:.28"></div>
<div class="a" style="left:40.5px;top:255.20px;width:18.80px;height:0.80px;background:#444;opacity:.28"></div>
<div class="a" style="left:40.5px;top:257.80px;width:18.80px;height:0.80px;background:#444;opacity:.28"></div>
<div class="a" style="left:40.5px;top:260.40px;width:18.80px;height:0.80px;background:#444;opacity:.28"></div>
<div class="a" style="left:40.5px;top:263.00px;width:18.80px;height:0.80px;background:#444;opacity:.28"></div>
<div class="a" style="left:40.5px;top:265.60px;width:18.80px;height:0.80px;background:#444;opacity:.28"></div>
<div class="a" style="left:40.5px;top:268.20px;width:12.80px;height:0.80px;background:#444;opacity:.28"></div>
<svg class="a" style="left:39.5px;top:272.50px" width="21.80" height="19.40"><use href="#p1"/></svg>
<div class="t" style="left:61.8px;top:243.20px;font-size:4.8px;color:#222;font-weight:700">2.</div>
<div class="a" style="left:61.3px;top:248.80px;width:21.90px;height:23.70px;background:#fd6553;"></div>
<div class="a" style="left:62.3px;top:250.00px;width:18.90px;height:0.80px;background:#444;opacity:.28"></div>
<div class="a" style="left:62.3px;top:252.60px;width:18.90px;height:0.80px;background:#444;opacity:.28"></div>
<div class="a" style="left:62.3px;top:255.20px;width:18.90px;height:0.80px;background:#444;opacity:.28"></div>
<div class="a" style="left:62.3px;top:257.80px;width:18.90px;height:0.80px;background:#444;opacity:.28"></div>
<div class="a" style="left:62.3px;top:260.40px;width:18.90px;height:0.80px;background:#444;opacity:.28"></div>
<div class="a" style="left:62.3px;top:263.00px;width:18.90px;height:0.80px;background:#444;opacity:.28"></div>
<div class="a" style="left:62.3px;top:265.60px;width:18.90px;height:0.80px;background:#444;opacity:.28"></div>
<div class="a" style="left:62.3px;top:268.20px;width:12.90px;height:0.80px;background:#444;opacity:.28"></div>
<svg class="a" style="left:61.3px;top:272.50px" width="21.90" height="19.40"><use href="#p2"/></svg>
<div class="t" style="left:83.7px;top:243.20px;font-size:4.8px;color:#222;font-weight:700">3.</div>
<div class="a" style="left:83.2px;top:248.80px;width:21.80px;height:23.70px;background:#55bd8a;"></div>
<div class="a" style="left:84.2px;top:250.00px;width:18.80px;height:0.80px;background:#444;opacity:.28"></div>
<div class="a" style="left:84.2px;top:252.60px;width:18.80px;height:0.80px;background:#444;opacity:.28"></div>
<div class="a" style="left:84.2px;top:255.20px;width:18.80px;height:0.80px;background:#444;opacity:.28"></div>
<div class="a" style="left:84.2px;top:257.80px;width:18.80px;height:0.80px;background:#444;opacity:.28"></div>
<div class="a" style="left:84.2px;top:260.40px;width:18.80px;height:0.80px;background:#444;opacity:.28"></div>
<div class="a" style="left:84.2px;top:263.00px;width:18.80px;height:0.80px;background:#444;opacity:.28"></div>
<div class="a" style="left:84.2px;top:265.60px;width:18.80px;height:0.80px;background:#444;opacity:.28"></div>
<div class="a" style="left:84.2px;top:268.20px;width:12.80px;height:0.80px;background:#444;opacity:.28"></div>
<svg class="a" style="left:83.2px;top:272.50px" width="21.80" height="19.40"><use href="#p3"/></svg>
<div class="t" style="left:105.5px;top:243.20px;font-size:4.8px;color:#222;font-weight:700">4.</div>
<div class="a" style="left:105px;top:248.80px;width:21.20px;height:23.70px;background:#ffbfe2;"></div>
<div class="a" style="left:106px;top:250.00px;width:18.20px;height:0.80px;background:#444;opacity:.28"></div>
<div class="a" style="left:106px;top:252.60px;width:18.20px;height:0.80px;background:#444;opacity:.28"></div>
<div class="a" style="left:106px;top:255.20px;width:18.20px;height:0.80px;background:#444;opacity:.28"></div>
<div class="a" style="left:106px;top:257.80px;width:18.20px;height:0.80px;background:#444;opacity:.28"></div>
<div class="a" style="left:106px;top:260.40px;width:18.20px;height:0.80px;background:#444;opacity:.28"></div>
<div class="a" style="left:106px;top:263.00px;width:18.20px;height:0.80px;background:#444;opacity:.28"></div>
<div class="a" style="left:106px;top:265.60px;width:18.20px;height:0.80px;background:#444;opacity:.28"></div>
<div class="a" style="left:106px;top:268.20px;width:12.20px;height:0.80px;background:#444;opacity:.28"></div>
<svg class="a" style="left:105px;top:272.50px" width="21.20" height="19.40"><use href="#p4"/></svg>
<div class="t" style="left:126.7px;top:243.20px;font-size:4.8px;color:#222;font-weight:700">5.</div>
<div class="a" style="left:126.2px;top:248.80px;width:21.80px;height:23.70px;background:#ffdd2e;"></div>
<div class="a" style="left:127.2px;top:250.00px;width:18.80px;height:0.80px;background:#444;opacity:.28"></div>
<div class="a" style="left:127.2px;top:252.60px;width:18.80px;height:0.80px;background:#444;opacity:.28"></div>
<div class="a" style="left:127.2px;top:255.20px;width:18.80px;height:0.80px;background:#444;opacity:.28"></div>
<div class="a" style="left:127.2px;top:257.80px;width:18.80px;height:0.80px;background:#444;opacity:.28"></div>
<div class="a" style="left:127.2px;top:260.40px;width:18.80px;height:0.80px;background:#444;opacity:.28"></div>
<div class="a" style="left:127.2px;top:263.00px;width:18.80px;height:0.80px;background:#444;opacity:.28"></div>
<div class="a" style="left:127.2px;top:265.60px;width:18.80px;height:0.80px;background:#444;opacity:.28"></div>
<div class="a" style="left:127.2px;top:268.20px;width:12.80px;height:0.80px;background:#444;opacity:.28"></div>
<svg class="a" style="left:126.2px;top:272.50px" width="21.80" height="19.40"><use href="#p5"/></svg>
<div class="a" style="left:33.2px;top:309.2px;width:121.5px;height:70.7px;border:1.3px solid #d2d2d2;border-radius:12px;background:#fdfef0"></div>
<div class="a" style="left:39.5px;top:315.70px;width:72.30px;height:7.10px;background:#ffbfe2;box-shadow:inset 0 0 0 0.4px rgba(0,0,0,.35)"></div>
<div class="t" style="left:41px;top:316.40px;font-size:6.2px;color:#222;color:#333">Presentation Goal</div>
<div class="a" style="left:142px;top:315.70px;width:6.00px;height:5.70px;background:#55bd8a;border:0.5px solid #333"></div>
<svg class="a" style="left:39.5px;top:325.30px" width="53.20" height="47.70" viewBox="12 0 118 103" preserveAspectRatio="none"><use href="#p1" width="210" height="103"/></svg>
<div class="a" style="left:92.7px;top:325.30px;width:55.30px;height:28.90px;background:#ffdd2e;"></div>
<div class="t" style="left:94px;top:326.50px;font-size:3.8px;color:#222;line-height:1.05;font-weight:700">Option 1: Lorem<br>Ipsum Dolor</div>
<div class="a" style="left:94px;top:335.00px;width:52.00px;height:0.80px;background:#444;opacity:.28"></div>
<div class="a" style="left:94px;top:337.40px;width:52.00px;height:0.80px;background:#444;opacity:.28"></div>
<div class="a" style="left:94px;top:339.80px;width:52.00px;height:0.80px;background:#444;opacity:.28"></div>
<div class="a" style="left:94px;top:342.20px;width:52.00px;height:0.80px;background:#444;opacity:.28"></div>
<div class="a" style="left:94px;top:344.60px;width:52.00px;height:0.80px;background:#444;opacity:.28"></div>
<div class="a" style="left:94px;top:347.00px;width:32.00px;height:0.80px;background:#444;opacity:.28"></div>
<div class="a" style="left:92.7px;top:354.20px;width:15.00px;height:12.20px;background:#fd6553;"></div>
<div class="a" style="left:107.7px;top:354.20px;width:6.30px;height:6.00px;background:#68d0e6;"></div>
<div class="a" style="left:33.2px;top:390.7px;width:121.5px;height:80px;border:1.3px solid #d2d2d2;border-radius:12px;background:#fdfef0"></div>
<div class="a" style="left:57.3px;top:401.60px;width:59.90px;height:20.70px;background:#55bd8a;"></div>
<div class="t" style="left:59px;top:403.50px;font-size:6px;color:#222;line-height:0.95;color:#333">Option 2:<br>Introduction</div>
<div class="a" style="left:50.4px;top:415.20px;width:6.90px;height:7.10px;background:#fd6553;"></div>
<svg class="a" style="left:44.2px;top:422.30px" width="39.80" height="29.70"><use href="#p2"/></svg>
<svg class="a" style="left:84px;top:422.30px" width="20.10" height="20.50" viewBox="40 0 100 103" preserveAspectRatio="none"><use href="#p1" width="210" height="103"/></svg>
<div class="a" style="left:142px;top:397.00px;width:6.00px;height:6.00px;background:#55bd8a;border:0.5px solid #333"></div>
</div>
<div class="t" style="left:10px;width:21px;text-align:center;top:155.3px;font-size:12.5px;color:#1f1f1f">3</div>
<div class="t" style="left:10px;width:21px;text-align:center;top:237.0px;font-size:12.5px;color:#1f1f1f">4</div>
<div class="t" style="left:10px;width:21px;text-align:center;top:318.0px;font-size:12.5px;color:#1f1f1f">5</div>
<div class="t" style="left:10px;width:21px;text-align:center;top:399.4px;font-size:12.5px;color:#1f1f1f">6</div>
<div class="t" style="left:10px;width:21px;text-align:center;top:479.8px;font-size:12.5px;color:#1f1f1f">7</div>
<svg class="i" style="left:10px;top:418px" width="15" height="15" viewBox="0 0 15 15" fill="none" stroke="#444746" stroke-width="1.5"><ellipse cx="5" cy="10" rx="3.4" ry="2.6" transform="rotate(-45 5 10)"/><ellipse cx="7.5" cy="7.5" rx="3.4" ry="2.6" transform="rotate(-45 7.5 7.5)"/><ellipse cx="10" cy="5" rx="3.4" ry="2.6" transform="rotate(-45 10 5)"/></svg>
<div class="a" style="left:164px;top:133px;width:6px;height:153px;border-radius:3px;background:#dadce0"></div>
<svg class="i" style="left:21.5px;top:555.5px" width="12.5" height="12.5" viewBox="0 0 12.5 12.5" fill="none" stroke="#444746" stroke-width="1.6"><rect x="1" y="1" width="4" height="4" rx=".6"/><rect x="7.5" y="1" width="4" height="4" rx=".6"/><rect x="1" y="7.5" width="4" height="4" rx=".6"/><rect x="7.5" y="7.5" width="4" height="4" rx=".6"/></svg>
<svg class="i" style="left:61px;top:557px" width="10" height="10" viewBox="0 0 10 10" fill="none" stroke="#444746" stroke-width="1.5"><path d="M7 1L3 5l4 4"/></svg>
<svg class="i" style="left:0;top:570px" width="20" height="17"><path d="M0 8.5A10 10 0 0 0 4.7 17H0z" fill="#2a6a5a"/></svg>
<!-- ===== RULERS ===== -->
<div class="a" style="left:187px;top:103.3px;width:684px;height:1px;background:#dadce0"></div>
<div class="a" style="left:201.3px;top:103.3px;width:669.7px;height:1.2px;background:#80868b"></div>
<div class="a" style="left:200.80px;top:101.00px;width:1px;height:3px;background:#80868b"></div>
<div class="a" style="left:209.19px;top:101.00px;width:1px;height:3px;background:#80868b"></div>
<div class="a" style="left:217.58px;top:101.00px;width:1px;height:3px;background:#80868b"></div>
<div class="a" style="left:225.96px;top:101.00px;width:1px;height:3px;background:#80868b"></div>
<div class="a" style="left:234.35px;top:97.50px;width:1px;height:6.5px;background:#80868b"></div>
<div class="a" style="left:242.74px;top:101.00px;width:1px;height:3px;background:#80868b"></div>
<div class="a" style="left:251.12px;top:101.00px;width:1px;height:3px;background:#80868b"></div>
<div class="a" style="left:259.51px;top:101.00px;width:1px;height:3px;background:#80868b"></div>
<div class="a" style="left:267.90px;top:101.00px;width:1px;height:3px;background:#80868b"></div>
<div class="t" style="left:258.40px;width:20px;text-align:center;top:91.8px;font-size:8.6px;-webkit-text-stroke:0.25px #3c4043;color:#3c4043">1</div>
<div class="a" style="left:276.29px;top:101.00px;width:1px;height:3px;background:#80868b"></div>
<div class="a" style="left:284.68px;top:101.00px;width:1px;height:3px;background:#80868b"></div>
<div class="a" style="left:293.06px;top:101.00px;width:1px;height:3px;background:#80868b"></div>
<div class="a" style="left:301.45px;top:97.50px;width:1px;height:6.5px;background:#80868b"></div>
<div class="a" style="left:309.84px;top:101.00px;width:1px;height:3px;background:#80868b"></div>
<div class="a" style="left:318.23px;top:101.00px;width:1px;height:3px;background:#80868b"></div>
<div class="a" style="left:326.61px;top:101.00px;width:1px;height:3px;background:#80868b"></div>
<div class="a" style="left:335.00px;top:101.00px;width:1px;height:3px;background:#80868b"></div>
<div class="t" style="left:325.50px;width:20px;text-align:center;top:91.8px;font-size:8.6px;-webkit-text-stroke:0.25px #3c4043;color:#3c4043">2</div>
<div class="a" style="left:343.39px;top:101.00px;width:1px;height:3px;background:#80868b"></div>
<div class="a" style="left:351.77px;top:101.00px;width:1px;height:3px;background:#80868b"></div>
<div class="a" style="left:360.16px;top:101.00px;width:1px;height:3px;background:#80868b"></div>
<div class="a" style="left:368.55px;top:97.50px;width:1px;height:6.5px;background:#80868b"></div>
<div class="a" style="left:376.94px;top:101.00px;width:1px;height:3px;background:#80868b"></div>
<div class="a" style="left:385.32px;top:101.00px;width:1px;height:3px;background:#80868b"></div>
<div class="a" style="left:393.71px;top:101.00px;width:1px;height:3px;background:#80868b"></div>
<div class="a" style="left:402.10px;top:101.00px;width:1px;height:3px;background:#80868b"></div>
<div class="t" style="left:392.60px;width:20px;text-align:center;top:91.8px;font-size:8.6px;-webkit-text-stroke:0.25px #3c4043;color:#3c4043">3</div>
<div class="a" style="left:410.49px;top:101.00px;width:1px;height:3px;background:#80868b"></div>
<div class="a" style="left:418.88px;top:101.00px;width:1px;height:3px;background:#80868b"></div>
<div class="a" style="left:427.26px;top:101.00px;width:1px;height:3px;background:#80868b"></div>
<div class="a" style="left:435.65px;top:97.50px;width:1px;height:6.5px;background:#80868b"></div>
<div class="a" style="left:444.04px;top:101.00px;width:1px;height:3px;background:#80868b"></div>
<div class="a" style="left:452.42px;top:101.00px;width:1px;height:3px;background:#80868b"></div>
<div class="a" style="left:460.81px;top:101.00px;width:1px;height:3px;background:#80868b"></div>
<div class="a" style="left:469.20px;top:101.00px;width:1px;height:3px;background:#80868b"></div>
<div class="t" style="left:459.70px;width:20px;text-align:center;top:91.8px;font-size:8.6px;-webkit-text-stroke:0.25px #3c4043;color:#3c4043">4</div>
<div class="a" style="left:477.59px;top:101.00px;width:1px;height:3px;background:#80868b"></div>
<div class="a" style="left:485.97px;top:101.00px;width:1px;height:3px;background:#80868b"></div>
<div class="a" style="left:494.36px;top:101.00px;width:1px;height:3px;background:#80868b"></div>
<div class="a" style="left:502.75px;top:97.50px;width:1px;height:6.5px;background:#80868b"></div>
<div class="a" style="left:511.14px;top:101.00px;width:1px;height:3px;background:#80868b"></div>
<div class="a" style="left:519.52px;top:101.00px;width:1px;height:3px;background:#80868b"></div>
<div class="a" style="left:527.91px;top:101.00px;width:1px;height:3px;background:#80868b"></div>
<div class="a" style="left:536.30px;top:101.00px;width:1px;height:3px;background:#80868b"></div>
<div class="t" style="left:526.80px;width:20px;text-align:center;top:91.8px;font-size:8.6px;-webkit-text-stroke:0.25px #3c4043;color:#3c4043">5</div>
<div class="a" style="left:544.69px;top:101.00px;width:1px;height:3px;background:#80868b"></div>
<div class="a" style="left:553.08px;top:101.00px;width:1px;height:3px;background:#80868b"></div>
<div class="a" style="left:561.46px;top:101.00px;width:1px;height:3px;background:#80868b"></div>
<div class="a" style="left:569.85px;top:97.50px;width:1px;height:6.5px;background:#80868b"></div>
<div class="a" style="left:578.24px;top:101.00px;width:1px;height:3px;background:#80868b"></div>
<div class="a" style="left:586.62px;top:101.00px;width:1px;height:3px;background:#80868b"></div>
<div class="a" style="left:595.01px;top:101.00px;width:1px;height:3px;background:#80868b"></div>
<div class="a" style="left:603.40px;top:101.00px;width:1px;height:3px;background:#80868b"></div>
<div class="t" style="left:593.90px;width:20px;text-align:center;top:91.8px;font-size:8.6px;-webkit-text-stroke:0.25px #3c4043;color:#3c4043">6</div>
<div class="a" style="left:611.79px;top:101.00px;width:1px;height:3px;background:#80868b"></div>
<div class="a" style="left:620.17px;top:101.00px;width:1px;height:3px;background:#80868b"></div>
<div class="a" style="left:628.56px;top:101.00px;width:1px;height:3px;background:#80868b"></div>
<div class="a" style="left:636.95px;top:97.50px;width:1px;height:6.5px;background:#80868b"></div>
<div class="a" style="left:645.34px;top:101.00px;width:1px;height:3px;background:#80868b"></div>
<div class="a" style="left:653.72px;top:101.00px;width:1px;height:3px;background:#80868b"></div>
<div class="a" style="left:662.11px;top:101.00px;width:1px;height:3px;background:#80868b"></div>
<div class="a" style="left:670.50px;top:101.00px;width:1px;height:3px;background:#80868b"></div>
<div class="t" style="left:661.00px;width:20px;text-align:center;top:91.8px;font-size:8.6px;-webkit-text-stroke:0.25px #3c4043;color:#3c4043">7</div>
<div class="a" style="left:678.89px;top:101.00px;width:1px;height:3px;background:#80868b"></div>
<div class="a" style="left:687.27px;top:101.00px;width:1px;height:3px;background:#80868b"></div>
<div class="a" style="left:695.66px;top:101.00px;width:1px;height:3px;background:#80868b"></div>
<div class="a" style="left:704.05px;top:97.50px;width:1px;height:6.5px;background:#80868b"></div>
<div class="a" style="left:712.44px;top:101.00px;width:1px;height:3px;background:#80868b"></div>
<div class="a" style="left:720.83px;top:101.00px;width:1px;height:3px;background:#80868b"></div>
<div class="a" style="left:729.21px;top:101.00px;width:1px;height:3px;background:#80868b"></div>
<div class="a" style="left:737.60px;top:101.00px;width:1px;height:3px;background:#80868b"></div>
<div class="t" style="left:728.10px;width:20px;text-align:center;top:91.8px;font-size:8.6px;-webkit-text-stroke:0.25px #3c4043;color:#3c4043">8</div>
<div class="a" style="left:745.99px;top:101.00px;width:1px;height:3px;background:#80868b"></div>
<div class="a" style="left:754.38px;top:101.00px;width:1px;height:3px;background:#80868b"></div>
<div class="a" style="left:762.76px;top:101.00px;width:1px;height:3px;background:#80868b"></div>
<div class="a" style="left:771.15px;top:97.50px;width:1px;height:6.5px;background:#80868b"></div>
<div class="a" style="left:779.54px;top:101.00px;width:1px;height:3px;background:#80868b"></div>
<div class="a" style="left:787.92px;top:101.00px;width:1px;height:3px;background:#80868b"></div>
<div class="a" style="left:796.31px;top:101.00px;width:1px;height:3px;background:#80868b"></div>
<div class="a" style="left:804.70px;top:101.00px;width:1px;height:3px;background:#80868b"></div>
<div class="t" style="left:795.20px;width:20px;text-align:center;top:91.8px;font-size:8.6px;-webkit-text-stroke:0.25px #3c4043;color:#3c4043">9</div>
<div class="a" style="left:813.09px;top:101.00px;width:1px;height:3px;background:#80868b"></div>
<div class="a" style="left:821.47px;top:101.00px;width:1px;height:3px;background:#80868b"></div>
<div class="a" style="left:829.86px;top:101.00px;width:1px;height:3px;background:#80868b"></div>
<div class="a" style="left:838.25px;top:97.50px;width:1px;height:6.5px;background:#80868b"></div>
<div class="a" style="left:846.64px;top:101.00px;width:1px;height:3px;background:#80868b"></div>
<div class="a" style="left:855.02px;top:101.00px;width:1px;height:3px;background:#80868b"></div>
<div class="a" style="left:863.41px;top:101.00px;width:1px;height:3px;background:#80868b"></div>
<div class="a" style="left:186.5px;top:104px;width:1px;height:415px;background:#dadce0"></div>
<div class="a" style="left:186.3px;top:123px;width:1.2px;height:378px;background:#80868b"></div>
<div class="a" style="left:184.00px;top:122.80px;width:3px;height:1px;background:#80868b"></div>
<div class="a" style="left:184.00px;top:131.19px;width:3px;height:1px;background:#80868b"></div>
<div class="a" style="left:184.00px;top:139.57px;width:3px;height:1px;background:#80868b"></div>
<div class="a" style="left:184.00px;top:147.96px;width:3px;height:1px;background:#80868b"></div>
<div class="a" style="left:180.50px;top:156.35px;width:6.5px;height:1px;background:#80868b"></div>
<div class="a" style="left:184.00px;top:164.74px;width:3px;height:1px;background:#80868b"></div>
<div class="a" style="left:184.00px;top:173.12px;width:3px;height:1px;background:#80868b"></div>
<div class="a" style="left:184.00px;top:181.51px;width:3px;height:1px;background:#80868b"></div>
<div class="a" style="left:184.00px;top:189.90px;width:3px;height:1px;background:#80868b"></div>
<div class="t" style="left:168.00px;width:20px;text-align:center;top:186.10px;font-size:8.6px;-webkit-text-stroke:0.25px #3c4043;color:#3c4043;transform:rotate(-90deg)">1</div>
<div class="a" style="left:184.00px;top:198.29px;width:3px;height:1px;background:#80868b"></div>
<div class="a" style="left:184.00px;top:206.68px;width:3px;height:1px;background:#80868b"></div>
<div class="a" style="left:184.00px;top:215.06px;width:3px;height:1px;background:#80868b"></div>
<div class="a" style="left:180.50px;top:223.45px;width:6.5px;height:1px;background:#80868b"></div>
<div class="a" style="left:184.00px;top:231.84px;width:3px;height:1px;background:#80868b"></div>
<div class="a" style="left:184.00px;top:240.22px;width:3px;height:1px;background:#80868b"></div>
<div class="a" style="left:184.00px;top:248.61px;width:3px;height:1px;background:#80868b"></div>
<div class="a" style="left:184.00px;top:257.00px;width:3px;height:1px;background:#80868b"></div>
<div class="t" style="left:168.00px;width:20px;text-align:center;top:253.20px;font-size:8.6px;-webkit-text-stroke:0.25px #3c4043;color:#3c4043;transform:rotate(-90deg)">2</div>
<div class="a" style="left:184.00px;top:265.39px;width:3px;height:1px;background:#80868b"></div>
<div class="a" style="left:184.00px;top:273.77px;width:3px;height:1px;background:#80868b"></div>
<div class="a" style="left:184.00px;top:282.16px;width:3px;height:1px;background:#80868b"></div>
<div class="a" style="left:180.50px;top:290.55px;width:6.5px;height:1px;background:#80868b"></div>
<div class="a" style="left:184.00px;top:298.94px;width:3px;height:1px;background:#80868b"></div>
<div class="a" style="left:184.00px;top:307.32px;width:3px;height:1px;background:#80868b"></div>
<div class="a" style="left:184.00px;top:315.71px;width:3px;height:1px;background:#80868b"></div>
<div class="a" style="left:184.00px;top:324.10px;width:3px;height:1px;background:#80868b"></div>
<div class="t" style="left:168.00px;width:20px;text-align:center;top:320.30px;font-size:8.6px;-webkit-text-stroke:0.25px #3c4043;color:#3c4043;transform:rotate(-90deg)">3</div>
<div class="a" style="left:184.00px;top:332.49px;width:3px;height:1px;background:#80868b"></div>
<div class="a" style="left:184.00px;top:340.88px;width:3px;height:1px;background:#80868b"></div>
<div class="a" style="left:184.00px;top:349.26px;width:3px;height:1px;background:#80868b"></div>
<div class="a" style="left:180.50px;top:357.65px;width:6.5px;height:1px;background:#80868b"></div>
<div class="a" style="left:184.00px;top:366.04px;width:3px;height:1px;background:#80868b"></div>
<div class="a" style="left:184.00px;top:374.42px;width:3px;height:1px;background:#80868b"></div>
<div class="a" style="left:184.00px;top:382.81px;width:3px;height:1px;background:#80868b"></div>
<div class="a" style="left:184.00px;top:391.20px;width:3px;height:1px;background:#80868b"></div>
<div class="t" style="left:168.00px;width:20px;text-align:center;top:387.40px;font-size:8.6px;-webkit-text-stroke:0.25px #3c4043;color:#3c4043;transform:rotate(-90deg)">4</div>
<div class="a" style="left:184.00px;top:399.59px;width:3px;height:1px;background:#80868b"></div>
<div class="a" style="left:184.00px;top:407.97px;width:3px;height:1px;background:#80868b"></div>
<div class="a" style="left:184.00px;top:416.36px;width:3px;height:1px;background:#80868b"></div>
<div class="a" style="left:180.50px;top:424.75px;width:6.5px;height:1px;background:#80868b"></div>
<div class="a" style="left:184.00px;top:433.14px;width:3px;height:1px;background:#80868b"></div>
<div class="a" style="left:184.00px;top:441.52px;width:3px;height:1px;background:#80868b"></div>
<div class="a" style="left:184.00px;top:449.91px;width:3px;height:1px;background:#80868b"></div>
<div class="a" style="left:184.00px;top:458.30px;width:3px;height:1px;background:#80868b"></div>
<div class="t" style="left:168.00px;width:20px;text-align:center;top:454.50px;font-size:8.6px;-webkit-text-stroke:0.25px #3c4043;color:#3c4043;transform:rotate(-90deg)">5</div>
<div class="a" style="left:184.00px;top:466.69px;width:3px;height:1px;background:#80868b"></div>
<div class="a" style="left:184.00px;top:475.07px;width:3px;height:1px;background:#80868b"></div>
<div class="a" style="left:184.00px;top:483.46px;width:3px;height:1px;background:#80868b"></div>
<div class="a" style="left:180.50px;top:491.85px;width:6.5px;height:1px;background:#80868b"></div>
<div class="a" style="left:184.00px;top:500.24px;width:3px;height:1px;background:#80868b"></div>

<!-- ===== SLIDE ===== -->
<div class="a" style="left:200px;top:122px;width:672px;height:380px;border:1px solid #d9d9d9"></div>
<div class="a" style="left:201px;top:123px;width:670px;height:378px;overflow:hidden"><div class="a" style="left:0;top:0;width:670px;height:378px;background:#fdfef0"></div>
<div class="a" style="left:22px;top:22px;width:410px;height:45px;background:#ffbfe2;border:2px solid #1f1f1f"></div>
<div class="t" style="left:27.5px;top:29.80000000000001px;font-size:32.5px;letter-spacing:0.55px;color:#111">Options Pros and Cons</div>
<div class="a" style="left:611.4px;top:20.8px;width:36.8px;height:38px;background:#55bd8a;border:1.7px solid #1f1f1f"></div>
<div class="t" style="left:611.4px;width:36.8px;text-align:center;top:34.8px;font-size:12.5px;font-weight:700;-webkit-text-stroke:0.3px #111;color:#111">4</div>
<svg class="a" style="left:22px;top:79px" width="209" height="103"><use href="#p1"/></svg>
<svg class="a" style="left:231px;top:79px" width="208" height="103"><use href="#p2"/></svg>
<svg class="a" style="left:439px;top:79px" width="209" height="103"><use href="#p3"/></svg>
<div class="a" style="left:22px;top:181.5px;width:209px;height:173.5px;background:#68d0e6"></div>
<div class="a" style="left:231px;top:181.5px;width:208px;height:173.5px;background:#fd6553"></div>
<div class="a" style="left:439px;top:181.5px;width:209px;height:173.5px;background:#55bd8a"></div>
<div class="a" style="left:21px;top:78px;width:628px;height:278px;border:2px solid #1f1f1f"></div>
<div class="a" style="left:21px;top:180.5px;width:628px;height:2px;background:#1f1f1f"></div>
<div class="a" style="left:230px;top:78px;width:2px;height:278px;background:#1f1f1f"></div>
<div class="a" style="left:438.29999999999995px;top:78px;width:2px;height:278px;background:#1f1f1f"></div>
<div class="t" style="left:30.19999999999999px;top:189px;font-size:19px;font-weight:700;letter-spacing:0.4px;color:#111">Option 1</div>
<div class="t" style="left:30.69999999999999px;top:215.5px;font-size:11px;font-weight:700;color:#111">Pros:</div>
<div class="t" style="left:30.69999999999999px;top:282px;font-size:11px;font-weight:700;color:#111">Cons:</div>
<div class="a" style="left:41.69999999999999px;top:231.4px;width:4px;height:4px;border-radius:2px;background:#111"></div>
<div class="t" style="left:64.19999999999999px;top:227.4px;font-size:12px;letter-spacing:0.05px;color:#111">Lorem ipsum dolor</div>
<div class="a" style="left:41.69999999999999px;top:244.7px;width:4px;height:4px;border-radius:2px;background:#111"></div>
<div class="t" style="left:64.19999999999999px;top:240.7px;font-size:12px;letter-spacing:0.05px;color:#111">Sit amet, consectetur</div>
<div class="a" style="left:41.69999999999999px;top:258.0px;width:4px;height:4px;border-radius:2px;background:#111"></div>
<div class="t" style="left:64.19999999999999px;top:254.0px;font-size:12px;letter-spacing:0.05px;color:#111">Proin dignissim id est</div>
<div class="a" style="left:41.69999999999999px;top:297.9px;width:4px;height:4px;border-radius:2px;background:#111"></div>
<div class="t" style="left:64.19999999999999px;top:293.9px;font-size:12px;letter-spacing:0.05px;color:#111">Lorem ipsum dolor</div>
<div class="a" style="left:41.69999999999999px;top:311.2px;width:4px;height:4px;border-radius:2px;background:#111"></div>
<div class="t" style="left:64.19999999999999px;top:307.2px;font-size:12px;letter-spacing:0.05px;color:#111">Sit amet, consectetur</div>
<div class="a" style="left:41.69999999999999px;top:324.5px;width:4px;height:4px;border-radius:2px;background:#111"></div>
<div class="t" style="left:64.19999999999999px;top:320.5px;font-size:12px;letter-spacing:0.05px;color:#111">Proin dignissim id est</div>
<div class="t" style="left:238.5px;top:189px;font-size:19px;font-weight:700;letter-spacing:0.4px;color:#111">Option 2</div>
<div class="t" style="left:239px;top:215.5px;font-size:11px;font-weight:700;color:#111">Pros:</div>
<div class="t" style="left:239px;top:282px;font-size:11px;font-weight:700;color:#111">Cons:</div>
<div class="a" style="left:250px;top:231.4px;width:4px;height:4px;border-radius:2px;background:#111"></div>
<div class="t" style="left:272.5px;top:227.4px;font-size:12px;letter-spacing:0.05px;color:#111">Lorem ipsum dolor</div>
<div class="a" style="left:250px;top:244.7px;width:4px;height:4px;border-radius:2px;background:#111"></div>
<div class="t" style="left:272.5px;top:240.7px;font-size:12px;letter-spacing:0.05px;color:#111">Sit amet, consectetur</div>
<div class="a" style="left:250px;top:258.0px;width:4px;height:4px;border-radius:2px;background:#111"></div>
<div class="t" style="left:272.5px;top:254.0px;font-size:12px;letter-spacing:0.05px;color:#111">Proin dignissim id est</div>
<div class="a" style="left:250px;top:297.9px;width:4px;height:4px;border-radius:2px;background:#111"></div>
<div class="t" style="left:272.5px;top:293.9px;font-size:12px;letter-spacing:0.05px;color:#111">Lorem ipsum dolor</div>
<div class="a" style="left:250px;top:311.2px;width:4px;height:4px;border-radius:2px;background:#111"></div>
<div class="t" style="left:272.5px;top:307.2px;font-size:12px;letter-spacing:0.05px;color:#111">Sit amet, consectetur</div>
<div class="a" style="left:250px;top:324.5px;width:4px;height:4px;border-radius:2px;background:#111"></div>
<div class="t" style="left:272.5px;top:320.5px;font-size:12px;letter-spacing:0.05px;color:#111">Proin dignissim id est</div>
<div class="t" style="left:446.5px;top:189px;font-size:19px;font-weight:700;letter-spacing:0.4px;color:#111">Option 3</div>
<div class="t" style="left:447px;top:215.5px;font-size:11px;font-weight:700;color:#111">Pros:</div>
<div class="t" style="left:447px;top:282px;font-size:11px;font-weight:700;color:#111">Cons:</div>
<div class="a" style="left:458px;top:231.4px;width:4px;height:4px;border-radius:2px;background:#111"></div>
<div class="t" style="left:480.5px;top:227.4px;font-size:12px;letter-spacing:0.05px;color:#111">Lorem ipsum dolor</div>
<div class="a" style="left:458px;top:244.7px;width:4px;height:4px;border-radius:2px;background:#111"></div>
<div class="t" style="left:480.5px;top:240.7px;font-size:12px;letter-spacing:0.05px;color:#111">Sit amet, consectetur</div>
<div class="a" style="left:458px;top:258.0px;width:4px;height:4px;border-radius:2px;background:#111"></div>
<div class="t" style="left:480.5px;top:254.0px;font-size:12px;letter-spacing:0.05px;color:#111">Proin dignissim id est</div>
<div class="a" style="left:458px;top:297.9px;width:4px;height:4px;border-radius:2px;background:#111"></div>
<div class="t" style="left:480.5px;top:293.9px;font-size:12px;letter-spacing:0.05px;color:#111">Lorem ipsum dolor</div>
<div class="a" style="left:458px;top:311.2px;width:4px;height:4px;border-radius:2px;background:#111"></div>
<div class="t" style="left:480.5px;top:307.2px;font-size:12px;letter-spacing:0.05px;color:#111">Sit amet, consectetur</div>
<div class="a" style="left:458px;top:324.5px;width:4px;height:4px;border-radius:2px;background:#111"></div>
<div class="t" style="left:480.5px;top:320.5px;font-size:12px;letter-spacing:0.05px;color:#111">Proin dignissim id est</div></div>
<!-- ===== NOTES ===== -->
<div class="a" style="left:187px;top:540px;width:685px;height:38px;border-radius:8px;background:#edf2fa"></div>
<div class="t" style="left:199.5px;top:550.8px;font-size:11.7px;color:#1f1f1f">Click to add speaker notes</div>
<div class="a" style="left:511px;top:522px;width:37px;height:1.5px;background:#5f6368"></div>

<!-- ===== PANEL ===== -->
<div class="a" style="left:878.4px;top:44px;width:267.8px;height:539.5px;border:2.4px solid #ff1408;border-radius:11px"></div>
<div class="a" style="left:884.5px;top:50.2px;width:254.2px;height:527px;border-radius:14px;background:#f0f4f9"></div>
<svg class="i" style="left:897.5px;top:64.5px" width="19.5" height="19.5" viewBox="0 0 24 24" fill="none" stroke="#1f1f1f" stroke-width="1.7"><rect x="8" y="2.5" width="13" height="13" rx="1.5"/><circle cx="14.5" cy="9" r="2.6"/><path d="M4.5 7v10.5A2 2 0 0 0 6.5 19.5H17"/><path d="M2 10v10.5A1.5 1.5 0 0 0 3.5 22H14" /></svg>
<div class="t" style="left:923.8px;top:67.9px;font-size:13.4px;font-weight:400;letter-spacing:0.05px;-webkit-text-stroke:0.45px #1f1f1f;color:#1f1f1f">Building blocks</div>
<svg class="i" style="left:1107px;top:67px" width="15" height="15" viewBox="0 0 15 15" stroke="#1f1f1f" stroke-width="1.6"><path d="M2 2L13 13M13 2L2 13"/></svg>

<div style="color:#0b57d0;font-size:12.3px;font-weight:400;letter-spacing:0.2px;-webkit-text-stroke:0.45px #0b57d0">
<div class="t" style="left:897.6px;top:107.8px">Lists</div>
<div class="t" style="left:897.6px;top:259px">Key statistics</div>
<div class="t" style="left:898px;top:410.6px">Quotes</div>
<div class="t" style="left:898px;top:562.2px;letter-spacing:-0.1px">Headlines</div>
</div>
<svg class="i" style="left:927.75px;top:106.75px" width="14.5" height="14.5" viewBox="0 0 24 24" fill="#0b57d0"><path d="M12 4l-1.41 1.41L16.17 11H4v2h12.17l-5.58 5.59L12 20l8-8z"/></svg>
<svg class="i" style="left:974.95px;top:257.25px" width="14.5" height="14.5" viewBox="0 0 24 24" fill="#0b57d0"><path d="M12 4l-1.41 1.41L16.17 11H4v2h12.17l-5.58 5.59L12 20l8-8z"/></svg>
<svg class="i" style="left:941.05px;top:408.75px" width="14.5" height="14.5" viewBox="0 0 24 24" fill="#0b57d0"><path d="M12 4l-1.41 1.41L16.17 11H4v2h12.17l-5.58 5.59L12 20l8-8z"/></svg>
<svg class="i" style="left:955.25px;top:560.25px" width="14.5" height="14.5" viewBox="0 0 24 24" fill="#0b57d0"><path d="M12 4l-1.41 1.41L16.17 11H4v2h12.17l-5.58 5.59L12 20l8-8z"/></svg>

<!-- cards -->
<div class="a" style="left:898px;top:134px;width:129.7px;height:99px;border-radius:10px;background:#e7ecf4"></div>
<div class="a" style="left:1032.7px;top:134.4px;width:79.3px;height:47.4px;border-radius:10px;background:#e7ecf4"></div>
<div class="a" style="left:1032.7px;top:187.3px;width:79.3px;height:46px;border-radius:10px;background:#e7ecf4"></div>
<div class="a" style="left:1129.5px;top:134.8px;width:6px;height:102.8px;border-radius:3px;background:#d6d6d6"></div>

<div class="a" style="left:898.3px;top:285.8px;width:129.5px;height:100.2px;border-radius:10px;background:#e7ecf4"></div>
<div class="a" style="left:1032.5px;top:285.6px;width:79.6px;height:47.8px;border-radius:10px;background:#e7ecf4"></div>
<div class="a" style="left:1032.5px;top:338.5px;width:79.6px;height:47.4px;border-radius:10px;background:#e7ecf4"></div>

<div class="a" style="left:898px;top:437.6px;width:129.7px;height:100.2px;border-radius:10px;background:#e7ecf4"></div>
<div class="a" style="left:1033px;top:437.6px;width:79px;height:46.8px;border-radius:10px;background:#e7ecf4"></div>
<div class="a" style="left:1033px;top:490.2px;width:79px;height:46.8px;border-radius:10px;background:#e7ecf4"></div>

<div class="a" style="left:904.30px;top:147.30px;width:19.10px;height:18.50px;background:#fff;border:0.7px solid #9aa0a6;border-radius:2.5px"></div>
<div class="t" style="left:904.3px;top:148.9px;font-size:2.6px;width:19px;text-align:center;color:#555">STEP</div>
<div class="t" style="left:904.3px;top:152.5px;font-size:10.5px;width:19px;text-align:center;color:#1f1f1f">01</div>
<div class="a" style="left:924.00px;top:147.30px;width:79.50px;height:18.50px;background:#e3f1fc;border:0.7px solid #8a9099;border-radius:9px"></div>
<div class="t" style="left:929px;top:151.60000000000002px;font-size:3.6px;color:#333">Revamp our website and social media</div>
<div class="t" style="left:929px;top:156.60000000000002px;font-size:3.6px;color:#333">profiles</div>
<div class="a" style="left:1002.2px;top:146.95px;width:19.2px;height:19.2px;border-radius:50%;background:linear-gradient(135deg,#6a7f9a,#d9dde2);border:0.6px solid #777"></div>
<div class="a" style="left:904.30px;top:166.70px;width:19.10px;height:17.30px;background:#fff;border:0.7px solid #9aa0a6;border-radius:2.5px"></div>
<div class="t" style="left:904.3px;top:168.29999999999998px;font-size:2.6px;width:19px;text-align:center;color:#555">STEP</div>
<div class="t" style="left:904.3px;top:171.89999999999998px;font-size:10.5px;width:19px;text-align:center;color:#1f1f1f">02</div>
<div class="a" style="left:924.00px;top:166.70px;width:79.50px;height:17.30px;background:#e3f1fc;border:0.7px solid #8a9099;border-radius:9px"></div>
<div class="t" style="left:929px;top:171.0px;font-size:3.6px;color:#333">Revisit and update our referral schemes</div>
<div class="t" style="left:929px;top:176.0px;font-size:3.6px;color:#333">and policies</div>
<div class="a" style="left:1002.2px;top:165.75px;width:19.2px;height:19.2px;border-radius:50%;background:linear-gradient(135deg,#c9c3be,#5d6f86);border:0.6px solid #777"></div>
<div class="a" style="left:904.30px;top:185.30px;width:19.10px;height:17.50px;background:#fff;border:0.7px solid #9aa0a6;border-radius:2.5px"></div>
<div class="t" style="left:904.3px;top:186.9px;font-size:2.6px;width:19px;text-align:center;color:#555">STEP</div>
<div class="t" style="left:904.3px;top:190.5px;font-size:10.5px;width:19px;text-align:center;color:#1f1f1f">03</div>
<div class="a" style="left:924.00px;top:185.30px;width:79.50px;height:17.50px;background:#e3f1fc;border:0.7px solid #8a9099;border-radius:9px"></div>
<div class="t" style="left:929px;top:189.60000000000002px;font-size:3.6px;color:#333">Use existing networks and create new</div>
<div class="t" style="left:929px;top:194.60000000000002px;font-size:3.6px;color:#333">connections to form partnerships with</div>
<div class="a" style="left:1002.2px;top:184.45px;width:19.2px;height:19.2px;border-radius:50%;background:linear-gradient(135deg,#e09a5a,#2b6fa8);border:0.6px solid #777"></div>
<div class="a" style="left:904.30px;top:203.70px;width:19.10px;height:17.80px;background:#fff;border:0.7px solid #9aa0a6;border-radius:2.5px"></div>
<div class="t" style="left:904.3px;top:205.29999999999998px;font-size:2.6px;width:19px;text-align:center;color:#555">STEP</div>
<div class="t" style="left:904.3px;top:208.89999999999998px;font-size:10.5px;width:19px;text-align:center;color:#1f1f1f">04</div>
<div class="a" style="left:924.00px;top:203.70px;width:79.50px;height:17.80px;background:#e3f1fc;border:0.7px solid #8a9099;border-radius:9px"></div>
<div class="t" style="left:929px;top:208.0px;font-size:3.6px;color:#333">Assess which area can be further</div>
<div class="t" style="left:929px;top:213.0px;font-size:3.6px;color:#333">improved with new tools or technology</div>
<div class="a" style="left:1002.2px;top:203.00px;width:19.2px;height:19.2px;border-radius:50%;background:linear-gradient(135deg,#7aa6b8,#c8a67a);border:0.6px solid #777"></div>
<div class="t" style="left:929px;top:199.60000000000002px;font-size:3.6px;color:#333">local business</div>
<div class="a" style="left:1046.40px;top:140.70px;width:10.38px;height:14.10px;background:linear-gradient(135deg,#0a0a3a 20%,#1d4fff 45%,#e8f0ff 52%,#0a1a6a 70%);"></div>
<div class="a" style="left:1048.00px;top:156px;width:7.2px;height:7.2px;border-radius:50%;border:0.5px solid #c4c4c4;background:#f6f7f9"></div>
<div class="a" style="left:1046.60px;top:158.00px;width:0.40px;height:19.50px;background:#d4d6da;"></div>
<div class="a" style="left:1048.40px;top:165.50px;width:6.00px;height:0.50px;background:#cfcfcf;"></div>
<div class="a" style="left:1048.40px;top:167.30px;width:5.00px;height:0.50px;background:#d8d8d8;"></div>
<div class="a" style="left:1056.78px;top:140.70px;width:10.38px;height:14.10px;background:linear-gradient(135deg,#021a06 25%,#19c23a 48%,#c8ffc8 52%,#052a0a 75%);"></div>
<div class="a" style="left:1058.38px;top:156px;width:7.2px;height:7.2px;border-radius:50%;border:0.5px solid #c4c4c4;background:#f6f7f9"></div>
<div class="a" style="left:1056.98px;top:158.00px;width:0.40px;height:19.50px;background:#d4d6da;"></div>
<div class="a" style="left:1058.78px;top:165.50px;width:6.00px;height:0.50px;background:#cfcfcf;"></div>
<div class="a" style="left:1058.78px;top:167.30px;width:5.00px;height:0.50px;background:#d8d8d8;"></div>
<div class="a" style="left:1067.16px;top:140.70px;width:10.38px;height:14.10px;background:linear-gradient(135deg,#f0b0d0 10%,#c0306a 45%,#ffe0ee 60%,#d04a8a 90%);"></div>
<div class="a" style="left:1068.76px;top:156px;width:7.2px;height:7.2px;border-radius:50%;border:0.5px solid #c4c4c4;background:#f6f7f9"></div>
<div class="a" style="left:1067.36px;top:158.00px;width:0.40px;height:19.50px;background:#d4d6da;"></div>
<div class="a" style="left:1069.16px;top:165.50px;width:6.00px;height:0.50px;background:#cfcfcf;"></div>
<div class="a" style="left:1069.16px;top:167.30px;width:5.00px;height:0.50px;background:#d8d8d8;"></div>
<div class="a" style="left:1077.54px;top:140.70px;width:10.38px;height:14.10px;background:linear-gradient(135deg,#30084a 15%,#b03ad8 45%,#f3c8ff 55%,#4a1070 85%);"></div>
<div class="a" style="left:1079.14px;top:156px;width:7.2px;height:7.2px;border-radius:50%;border:0.5px solid #c4c4c4;background:#f6f7f9"></div>
<div class="a" style="left:1077.74px;top:158.00px;width:0.40px;height:19.50px;background:#d4d6da;"></div>
<div class="a" style="left:1079.54px;top:165.50px;width:6.00px;height:0.50px;background:#cfcfcf;"></div>
<div class="a" style="left:1079.54px;top:167.30px;width:5.00px;height:0.50px;background:#d8d8d8;"></div>
<div class="a" style="left:1087.92px;top:140.70px;width:10.38px;height:14.10px;background:linear-gradient(135deg,#00121a 20%,#1ab8ff 42%,#003a5a 58%,#1ad8ff 75%,#000 90%);"></div>
<div class="a" style="left:1089.52px;top:156px;width:7.2px;height:7.2px;border-radius:50%;border:0.5px solid #c4c4c4;background:#f6f7f9"></div>
<div class="a" style="left:1088.12px;top:158.00px;width:0.40px;height:19.50px;background:#d4d6da;"></div>
<div class="a" style="left:1089.92px;top:165.50px;width:6.00px;height:0.50px;background:#cfcfcf;"></div>
<div class="a" style="left:1089.92px;top:167.30px;width:5.00px;height:0.50px;background:#d8d8d8;"></div>
<div class="a" style="left:1098.10px;top:158.00px;width:0.40px;height:19.50px;background:#d4d6da;"></div>
<div class="a" style="left:1038.6px;top:197px;width:26.4px;height:29.2px;background:linear-gradient(90deg,#8a7a62 0%,#e8dcc8 18%,#b8a888 35%,#f0e8d8 55%,#9a8a70 75%,#d8ccb4 100%)"></div>
<div class="a" style="left:1038.6px;top:197px;width:26.4px;height:4px;background:#c8a070;opacity:.7"></div>
<div class="a" style="left:1049px;top:204px;width:5px;height:7px;background:#e8e4e0;border-radius:2px"></div>
<div class="a" style="left:1049.5px;top:210px;width:4px;height:14px;background:#3a5a9a;border-radius:1px"></div>
<div class="a" style="left:1065.50px;top:199.70px;width:2.00px;height:1.20px;background:#b04050;"></div>
<div class="a" style="left:1069.00px;top:199.80px;width:31.00px;height:0.60px;background:#b99;opacity:.5"></div>
<div class="a" style="left:1065.00px;top:202.70px;width:41.00px;height:0.30px;background:#f2c4cc;"></div>
<div class="a" style="left:1065.50px;top:205.60px;width:2.00px;height:1.20px;background:#b04050;"></div>
<div class="a" style="left:1069.00px;top:205.70px;width:28.00px;height:0.60px;background:#b99;opacity:.5"></div>
<div class="a" style="left:1065.00px;top:208.60px;width:41.00px;height:0.30px;background:#f2c4cc;"></div>
<div class="a" style="left:1065.50px;top:211.50px;width:2.00px;height:1.20px;background:#b04050;"></div>
<div class="a" style="left:1069.00px;top:211.60px;width:25.00px;height:0.60px;background:#b99;opacity:.5"></div>
<div class="a" style="left:1065.00px;top:214.50px;width:41.00px;height:0.30px;background:#f2c4cc;"></div>
<div class="a" style="left:1065.50px;top:217.40px;width:2.00px;height:1.20px;background:#b04050;"></div>
<div class="a" style="left:1069.00px;top:217.50px;width:31.00px;height:0.60px;background:#b99;opacity:.5"></div>
<div class="a" style="left:1065.00px;top:220.40px;width:41.00px;height:0.30px;background:#f2c4cc;"></div>
<div class="a" style="left:1065.50px;top:223.30px;width:2.00px;height:1.20px;background:#b04050;"></div>
<div class="a" style="left:1069.00px;top:223.40px;width:28.00px;height:0.60px;background:#b99;opacity:.5"></div>
<div class="a" style="left:1065.00px;top:226.30px;width:41.00px;height:0.30px;background:#f2c4cc;"></div>
<div class="a" style="left:903.80px;top:291.70px;width:118.10px;height:88.30px;background:#030a5e;border-radius:7px"></div>
<div class="a" style="left:906.20px;top:295.30px;width:112.60px;height:19.60px;background:#cfe5fb;border-radius:9px"></div>
<div class="t" style="left:906.2px;top:298.2px;font-size:13.2px;width:112.6px;text-align:center;font-family:'Liberation Serif',serif;font-weight:700;color:#030a5e;transform:scaleX(0.86);letter-spacing:-0.2px">Market Share</div>
<div class="a" style="left:906.7px;top:317.3px;width:48.2px;height:60.3px;border-radius:7px;overflow:hidden;background:linear-gradient(90deg,#f4f4f2,#d8dde2 60%,#e8ecef)"><div class="a" style="left:3px;top:14px;width:11px;height:46px;background:#2a2a30;border-radius:5px 5px 0 0"></div><div class="a" style="left:6px;top:16px;width:5px;height:12px;background:#e8e8e8"></div><div class="a" style="left:5px;top:6px;width:7px;height:9px;background:#3a2a22;border-radius:50%"></div><div class="a" style="left:15px;top:26px;width:11px;height:34px;background:#1e2228;border-radius:4px 4px 0 0"></div><div class="a" style="left:18px;top:27px;width:5px;height:8px;background:#f0f0f0"></div><div class="a" style="left:17px;top:17px;width:7px;height:9px;background:#2a1e18;border-radius:50%"></div><div class="a" style="left:27px;top:18px;width:16px;height:42px;background:#2d3848;border-radius:6px 6px 0 0"></div><div class="a" style="left:30px;top:8px;width:8px;height:10px;background:#3a2616;border-radius:50%"></div><div class="a" style="left:31px;top:28px;width:10px;height:5px;background:#3a8ad0"></div></div>
<div class="a" style="left:957.5px;top:316.6px;width:61px;height:60px;border-radius:50%;background:#cfe5fb"></div>
<div class="t" style="left:970px;top:329.8px;font-size:4.5px;color:#2a3a7a">20XX</div>
<div class="t" style="left:990px;top:326.0px;font-size:9px;width:15px;text-align:right;color:#1a2a6a">5</div>
<div class="t" style="left:1005.5px;top:330.2px;font-size:4.2px;color:#1a2a6a">%</div>
<div class="a" style="left:970.00px;top:335.00px;width:36.00px;height:0.40px;background:#8aa0c8;"></div>
<div class="t" style="left:970px;top:340.0px;font-size:4.5px;color:#2a3a7a">20XX</div>
<div class="t" style="left:990px;top:336.2px;font-size:9px;width:15px;text-align:right;color:#1a2a6a">7</div>
<div class="t" style="left:1005.5px;top:340.4px;font-size:4.2px;color:#1a2a6a">%</div>
<div class="a" style="left:970.00px;top:345.20px;width:36.00px;height:0.40px;background:#8aa0c8;"></div>
<div class="t" style="left:970px;top:350.2px;font-size:4.5px;color:#2a3a7a">20XX</div>
<div class="t" style="left:990px;top:346.4px;font-size:9px;width:15px;text-align:right;color:#1a2a6a">10</div>
<div class="t" style="left:1005.5px;top:350.59999999999997px;font-size:4.2px;color:#1a2a6a">%</div>
<div class="a" style="left:970.00px;top:355.40px;width:36.00px;height:0.40px;background:#8aa0c8;"></div>
<div class="t" style="left:970px;top:360.40000000000003px;font-size:4.5px;color:#2a3a7a">20XX</div>
<div class="t" style="left:990px;top:356.6px;font-size:9px;width:15px;text-align:right;color:#1a2a6a">15</div>
<div class="t" style="left:1005.5px;top:360.8px;font-size:4.2px;color:#1a2a6a">%</div>
<div class="a" style="left:970.00px;top:365.60px;width:36.00px;height:0.40px;background:#8aa0c8;"></div>
<div class="a" style="left:1042.2px;top:294px;width:45.2px;height:11.3px;background:#f7c52a;border-radius:2px;transform:rotate(-2deg)"></div>
<div class="t" style="left:1046px;top:295.6px;font-size:8.5px;font-weight:700;color:#2a4aa0">30M</div>
<div class="a" style="left:1064px;top:296px;width:6px;height:7px;background:#c8864a;border-radius:1px"></div>
<div class="a" style="left:1074px;top:296px;width:6px;height:7px;background:#1a5ac8;border-radius:50% 50% 1px 1px"></div>
<div class="a" style="left:1049.4px;top:304.7px;width:52.8px;height:10.9px;background:#ee1c1c;border-radius:2px"></div>
<div class="t" style="left:1055px;top:306px;font-size:8.5px;font-weight:700;color:#fff">15M</div>
<div class="a" style="left:1071.5px;top:305.5px;width:8px;height:9px;background:#e8c040;border-radius:50%"></div>
<div class="t" style="left:1080.5px;top:306px;font-size:8.5px;font-weight:700;color:#fff">PINS</div>
<div class="a" style="left:1041.5px;top:314.3px;width:55.3px;height:12.2px;background:#1f5bc4;border-radius:2px;transform:rotate(1.5deg)"></div>
<div class="a" style="left:1043.5px;top:315.5px;width:8px;height:9px;background:#b07a4a;border-radius:1px"></div>
<div class="t" style="left:1052px;top:316.3px;font-size:8.5px;font-weight:700;color:#fff;letter-spacing:-0.3px">10M LIKES</div>
<div class="a" style="left:1064px;top:292px;width:2.5px;height:2.5px;border-radius:50%;background:#e33"></div>
<div class="a" style="left:1100px;top:306px;width:2.5px;height:2.5px;border-radius:50%;background:#38c"></div>
<div class="a" style="left:1039.00px;top:350.80px;width:24.40px;height:10.70px;background:#e6dcf8;border-radius:1px"></div>
<div class="a" style="left:1043.00px;top:354.50px;width:16.00px;height:0.70px;background:#776;"></div>
<div class="a" style="left:1045.00px;top:357.00px;width:12.00px;height:0.60px;background:#887;"></div>
<div class="a" style="left:1039px;top:362px;width:11.8px;height:12.6px;border-radius:2px;background:linear-gradient(160deg,#e8e0d8,#a88a70)"></div>
<div class="a" style="left:1051.6px;top:362px;width:11.8px;height:12.6px;border-radius:2px;background:linear-gradient(160deg,#d8c898,#8a6a40)"></div>
<div class="a" style="left:1064.30px;top:350.30px;width:24.40px;height:24.30px;background:#080808;border-radius:2px"></div>
<div class="a" style="left:1067.5px;top:353.5px;width:18px;height:18px;border-radius:50%;border:1.6px solid #8a5ad8"></div>
<div class="t" style="left:1064.3px;top:359.5px;font-size:6px;width:24.4px;text-align:center;color:#ccc">92%</div>
<div class="a" style="left:1090.2px;top:350.3px;width:15.8px;height:24.3px;border-radius:2px;background:linear-gradient(180deg,#4a4030 0%,#2a5a9a 50%,#1a3a6a 100%)"></div>
<div class="a" style="left:1093px;top:362px;width:6px;height:8px;background:#e8e8e8;border-radius:1px"></div>
<div class="a" style="left:918.70px;top:443.00px;width:88.60px;height:43.70px;background:#0b1d3e;"></div>
<div class="t" style="left:924.5px;top:449.8px;font-size:4.8px;color:#fff">“Technological development is the</div>
<div class="t" style="left:924.5px;top:455.8px;font-size:4.8px;color:#fff">key to unlocking our potential,</div>
<div class="t" style="left:924.5px;top:461.8px;font-size:4.8px;color:#fff">fueling <span style="color:#5a9af8">innovation</span>, and achieving</div>
<div class="t" style="left:924.5px;top:467.8px;font-size:4.8px;color:#fff"><span style="color:#5a9af8">sustainable growth.</span>”</div>
<div class="t" style="left:924.5px;top:477px;font-size:3px;color:#fff;font-weight:700">Full Name</div>
<div class="a" style="left:918.7px;top:486.7px;width:66px;height:44.7px;background:linear-gradient(90deg,#d8d4cc,#ece8e2 50%,#d8d0c4)"></div>
<div class="a" style="left:924px;top:506px;width:36px;height:25.4px;background:#a9adb0;border-radius:12px 12px 0 0"></div>
<div class="a" style="left:936px;top:491px;width:12px;height:15px;background:#c09a80;border-radius:50%"></div><div class="a" style="left:935.5px;top:489.5px;width:13px;height:5px;background:#4a4440;border-radius:6px 6px 0 0"></div>
<div class="a" style="left:940.5px;top:506px;width:3px;height:16px;background:#2a2a30"></div><div class="a" style="left:937px;top:506px;width:10px;height:5px;background:#f4f4f4;clip-path:polygon(0 0,100% 0,50% 100%)"></div>
<div class="a" style="left:984.70px;top:486.70px;width:22.60px;height:44.70px;background:#c4d8f8;"></div>
<div class="a" style="left:963.3px;top:487.5px;width:44px;height:21.5px;background:#1a73e8;border-radius:11px 11px 11px 11px"></div>
<div class="a" style="left:963.3px;top:509px;width:44px;height:22.4px;background:#1a73e8;border-radius:11px 11px 0 11px"></div>
<div class="a" style="left:982px;top:470px;width:25.3px;height:17px;background:#0b1d3e;border-radius:0 0 0 9px"></div>
<div class="a" style="left:1000.00px;top:443.00px;width:7.30px;height:7.00px;background:#a8c8f0;"></div>
<div class="a" style="left:1053.00px;top:447.80px;width:21.00px;height:27.10px;background:#a8c0d8;"></div>
<div class="a" style="left:1058px;top:452px;width:10px;height:11px;background:#6a4a38;border-radius:50%"></div>
<div class="a" style="left:1055px;top:462px;width:17px;height:13px;background:#6aa8e8;border-radius:6px 6px 0 0"></div>
<div class="a" style="left:1073.00px;top:447.80px;width:18.40px;height:19.10px;background:#4a3ab8;"></div>
<div class="a" style="left:1075.00px;top:450.00px;width:13.00px;height:0.80px;background:#fff;opacity:.8"></div>
<div class="a" style="left:1075.00px;top:452.50px;width:11.00px;height:0.80px;background:#fff;opacity:.8"></div>
<div class="a" style="left:1075.00px;top:455.00px;width:12.00px;height:0.80px;background:#fff;opacity:.8"></div>
<div class="a" style="left:1082.80px;top:466.90px;width:8.60px;height:8.00px;background:#f4a8a0;"></div>
<div class="a" style="left:1042.00px;top:470.00px;width:18.00px;height:8.00px;background:#1f1f1f;"></div>
<div class="a" style="left:1043.50px;top:472.00px;width:8.50px;height:0.60px;background:#ddd;"></div>
<div class="a" style="left:1091.00px;top:462.00px;width:4.00px;height:4.00px;background:#1f1f1f;"></div>
<div class="a" style="left:1069.00px;top:445.00px;width:4.00px;height:4.00px;background:#1f1f1f;"></div>
<div class="a" style="left:1061.00px;top:478.00px;width:3.00px;height:3.00px;background:#4a8af0;"></div>
<div class="a" style="left:1093.00px;top:446.00px;width:2.00px;height:2.00px;background:#f4c020;"></div>
<div class="a" style="left:1038.80px;top:496.20px;width:66.90px;height:35.10px;background:#eef04a;"></div>
<div class="a" style="left:1038.8px;top:496.2px;width:31.2px;height:35.1px;background:linear-gradient(90deg,#d8d49a,#b8b890 60%,#e8e488)"></div>
<div class="a" style="left:1048px;top:499px;width:9px;height:10px;background:#3a2818;border-radius:50%"></div>
<div class="a" style="left:1045px;top:508px;width:17px;height:23.3px;background:#4a6aa8;border-radius:6px 6px 0 0"></div>
<div class="t" style="left:1072.5px;top:500.0px;font-size:3.8px;color:#1f1f1f;font-weight:700">“Your products</div>
<div class="t" style="left:1072.5px;top:504.6px;font-size:3.8px;color:#1f1f1f;font-weight:700">give me the tools I</div>
<div class="t" style="left:1072.5px;top:509.2px;font-size:3.8px;color:#1f1f1f;font-weight:700">need to achieve my</div>
<div class="t" style="left:1072.5px;top:513.8px;font-size:3.8px;color:#1f1f1f;font-weight:700">business goals.”</div>
<div class="a" style="left:1072.50px;top:523.00px;width:9.50px;height:0.60px;background:#555;"></div>
<div class="a" style="left:1096.00px;top:523.00px;width:6.00px;height:1.00px;background:#333;"></div>
<!-- ===== RAIL ===== -->
<div class="a" style="left:1151.8px;top:215.3px;width:37.5px;height:151.7px;border-radius:19px;background:#eef2f9"></div>
<div class="a" style="left:1151.8px;top:372.6px;width:37.5px;height:81px;border-radius:19px;background:#eef2f9"></div>
<div class="a" style="left:1156.4px;top:259.6px;width:28.1px;height:29px;border-radius:10px;background:#d3e3fd"></div>
<svg class="i" style="left:1162px;top:231px" width="16" height="16" viewBox="0 0 24 24" fill="none" stroke="#444746" stroke-width="2"><rect x="3" y="6" width="18" height="12" rx="1.5"/><path d="M6.5 10.5h7M6.5 13.5h7M17 10v4.5" /></svg>
<svg class="i" style="left:1162px;top:266px" width="16" height="16" viewBox="0 0 24 24" fill="none" stroke="#0b1f4a" stroke-width="2.1"><rect x="8" y="2.5" width="13" height="13" rx="1.5"/><circle cx="14.5" cy="9" r="2.6"/><path d="M4.5 7v10.5A2 2 0 0 0 6.5 19.5H17"/><path d="M2 10v10.5A1.5 1.5 0 0 0 3.5 22H14"/></svg>
<svg class="i" style="left:1162px;top:302px" width="16" height="16" viewBox="0 0 24 24" fill="none" stroke="#444746" stroke-width="2"><path d="M12 4H5a1.5 1.5 0 0 0-1.5 1.5v13A1.5 1.5 0 0 0 5 20h13a1.5 1.5 0 0 0 1.5-1.5V14"/><path d="M6 17l3.5-4 2.5 3 2-2 3 3z" fill="#444746" stroke-width="1"/><circle cx="17" cy="6.5" r="3"/><path d="M19.2 8.7L21.5 11"/></svg>
<svg class="i" style="left:1162px;top:336px" width="16" height="16" viewBox="0 0 24 24" fill="#444746"><path d="M9.17 6l2 2H20v10H4V6h5.17M10 4H4c-1.1 0-1.99.9-1.99 2L2 18c0 1.1.9 2 2 2h16c1.1 0 2-.9 2-2V8c0-1.1-.9-2-2-2h-8l-2-2z"/></svg>
<svg class="i" style="left:1162px;top:387px" width="16" height="16" viewBox="0 0 24 24" fill="#444746"><path d="M10 8v8l5-4-5-4zm9-5H5c-1.1 0-2 .9-2 2v14c0 1.1.9 2 2 2h14c1.1 0 2-.9 2-2V5c0-1.1-.9-2-2-2zm0 16H5V5h14v14z"/></svg>
<svg class="i" style="left:1162px;top:422px" width="16" height="16" viewBox="0 0 24 24" fill="#9aa0a6"><path d="M12 7c-2.76 0-5 2.24-5 5s2.24 5 5 5 5-2.240 5-5-2.24-5-5-5zm0-5C6.48 2 2 6.48 2 12s4.48 10 10 10 10-4.48 10-10S17.52 2 12 2zm0 18c-4.42 0-8-3.58-8-8s3.58-8 8-8 8 3.58 8 8-3.58 8-8 8z"/></svg>
<div class="a" style="left:1182.5px;top:552.5px;width:32px;height:32px;border-radius:50%;background:#fff;box-shadow:0 0.5px 2px rgba(0,0,0,.28)"></div>
<svg class="i" style="left:1190px;top:563.8px" width="9" height="10" viewBox="0 0 9 10" fill="none" stroke="#1f1f1f" stroke-width="1.6"><path d="M6.5 1.2L2.6 5l3.9 3.8"/></svg>
<svg class="i" style="left:1190px;top:575px" width="10" height="12"><path d="M10 6A10 10 0 0 1 6.5 12H10z" fill="#3a6a4a"/></svg>
<!-- red arrow -->
<svg class="i" style="left:0;top:0" width="1200" height="587">
 <path d="M1047 139 Q1072 240 1138 265" fill="none" stroke="#ff1e0f" stroke-width="3.4" stroke-linecap="round"/>
 <path d="M1132.7 272.3 L1142.2 255.2 L1155 273.2 Z" fill="#ff1e0f"/>
</svg>

</body></html>
